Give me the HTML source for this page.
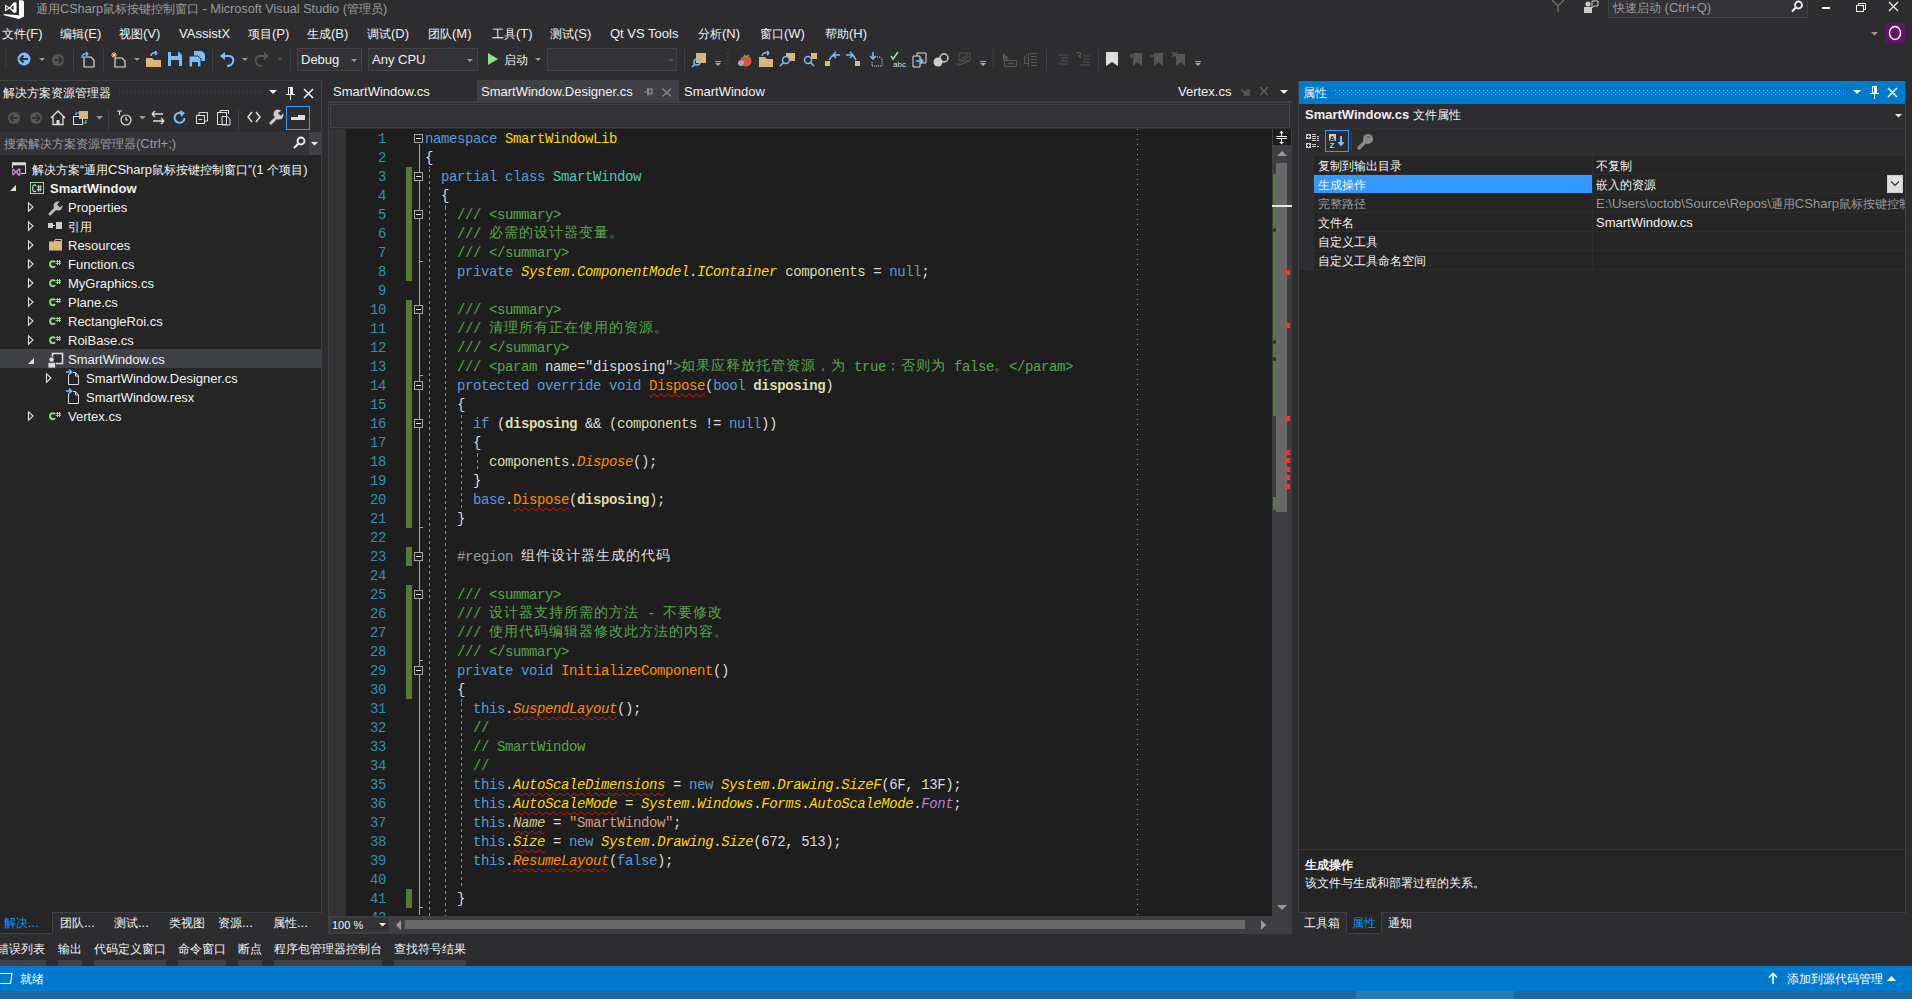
<!DOCTYPE html><html><head><meta charset="utf-8"><style>
*{box-sizing:border-box}
html,body{margin:0;padding:0}
body{width:1912px;height:999px;background:#2d2d30;position:relative;overflow:hidden;font-family:"Liberation Sans",sans-serif;font-size:12px;color:#f1f1f1}
.a{position:absolute;white-space:nowrap;line-height:16px;font-size:13px}
.z{font-size:0.923em}
svg.a{overflow:visible}
.code{font-family:"Liberation Mono",monospace;font-size:14px;letter-spacing:-0.4px;line-height:19px;color:#dcdcdc;left:425px;white-space:pre}
.k{color:#569cd6}.c{color:#57a64a}.t{color:#4ec9b0}.y{color:#ffd700}.yi{color:#ffd700;font-style:italic}
.o{color:#ff8c00}.oi{color:#ff8c00;font-style:italic}.p{color:#b180d7;font-style:italic}
.b{font-weight:bold;color:#dcdcaa}.w{color:#dcdcdc}.ni{color:#d2c98f;font-style:italic}.s{color:#d69d85}.f{color:#dcdcaa}.g{color:#9b9b9b}
.sq{text-decoration:underline wavy #e51400;text-decoration-thickness:1px;text-underline-offset:3px}
.cj{font-size:14px;letter-spacing:1px;position:relative;top:-1px}
.ln{font-family:"Liberation Mono",monospace;font-size:14px;letter-spacing:-0.4px;line-height:19px;color:#2b91af;text-align:right;width:40px;left:346px}
</style></head><body><svg class="a" style="left:0px;top:0px;" width="26" height="20" viewBox="0 0 26 20"><path d="M19 0.3 H22.5 L24 1.5 V16.5 L19 19 L3.7 15.2 V14 L19 15.2 Z" fill="#fff"/><path d="M5 4.5 L9.5 7.5 L14 2 L16.5 2.8 V12.2 L14 13 L9.5 8.5 L5 11.5 Z M6.2 6.6 V9.6 L8.3 8 Z M13.5 5 V10.6 L10.8 8 Z" fill="#fff" fill-rule="evenodd"/></svg><div class="a" style="left:36px;top:1px;color:#999;font-size:12.7px"><span class="z">通用</span>CSharp<span class="z">鼠标按键控制窗口</span> - Microsoft Visual Studio (<span class="z">管理员</span>)</div><svg class="a" style="left:1550px;top:0px;" width="16" height="14" viewBox="0 0 16 14"><path d="M2 0 L8 6 L14 0 M8 6 V12" stroke="#777" stroke-width="1.2" fill="none"/></svg><svg class="a" style="left:1583px;top:0px;" width="16" height="14" viewBox="0 0 16 14"><rect x="1" y="7" width="8" height="6" fill="#ccc"/><circle cx="5" cy="4" r="2.6" fill="#ccc"/><path d="M9 1 H15 V6 H11 L9 8 Z" stroke="#ccc" fill="none"/></svg><div class="a" style="left:1608px;top:0px;width:200px;height:18px;background:#333337;border:1px solid #434346;border-top:none"></div><div class="a" style="left:1613px;top:0px;color:#999"><span class="z">快速启动</span> (Ctrl+Q)</div><svg class="a" style="left:1790px;top:0px;" width="14" height="14" viewBox="0 0 14 14"><circle cx="8.5" cy="5" r="3.5" stroke="#eee" stroke-width="1.8" fill="none"/><path d="M6 7.5 L2 11.5" stroke="#eee" stroke-width="2.2"/></svg><div class="a" style="left:1822px;top:7px;width:8px;height:2px;background:#f1f1f1;"></div><svg class="a" style="left:1854px;top:1px;" width="14" height="12" viewBox="0 0 14 12"><rect x="2.5" y="4.5" width="7" height="6" stroke="#f1f1f1" fill="none"/><path d="M4.5 4.5 V2.5 H11.5 V8.5 H9.5" stroke="#f1f1f1" fill="none"/></svg><svg class="a" style="left:1888px;top:1px;" width="12" height="12" viewBox="0 0 12 12"><path d="M1 1 L10 10 M10 1 L1 10" stroke="#f1f1f1" stroke-width="1.3"/></svg><svg class="a" style="left:1871px;top:31px;" width="8" height="6" viewBox="0 0 8 6"><path d="M0 1 H7 L3.5 4.5Z" fill="#999"/></svg><div class="a" style="left:1885px;top:23px;width:20px;height:20px;background:#5e1566;"></div><svg class="a" style="left:1886px;top:24px;" width="18" height="18" viewBox="0 0 18 18"><ellipse cx="9" cy="9" rx="5.5" ry="6.5" stroke="#fff" stroke-width="1.4" fill="none"/></svg><div class="a" style="left:2px;top:26px;"><span class="z">文件</span>(F)</div><div class="a" style="left:60px;top:26px;"><span class="z">编辑</span>(E)</div><div class="a" style="left:119px;top:26px;"><span class="z">视图</span>(V)</div><div class="a" style="left:179px;top:26px;">VAssistX</div><div class="a" style="left:248px;top:26px;"><span class="z">项目</span>(P)</div><div class="a" style="left:307px;top:26px;"><span class="z">生成</span>(B)</div><div class="a" style="left:367px;top:26px;"><span class="z">调试</span>(D)</div><div class="a" style="left:428px;top:26px;"><span class="z">团队</span>(M)</div><div class="a" style="left:492px;top:26px;"><span class="z">工具</span>(T)</div><div class="a" style="left:550px;top:26px;"><span class="z">测试</span>(S)</div><div class="a" style="left:610px;top:26px;">Qt VS Tools</div><div class="a" style="left:698px;top:26px;"><span class="z">分析</span>(N)</div><div class="a" style="left:760px;top:26px;"><span class="z">窗口</span>(W)</div><div class="a" style="left:825px;top:26px;"><span class="z">帮助</span>(H)</div><svg class="a" style="left:5px;top:48px;" width="4" height="22" viewBox="0 0 4 22"><rect x="0" y="0" width="1" height="1" fill="#464646"/><rect x="1" y="2" width="1" height="1" fill="#464646"/><rect x="0" y="4" width="1" height="1" fill="#464646"/><rect x="1" y="6" width="1" height="1" fill="#464646"/><rect x="0" y="8" width="1" height="1" fill="#464646"/><rect x="1" y="10" width="1" height="1" fill="#464646"/><rect x="0" y="12" width="1" height="1" fill="#464646"/><rect x="1" y="14" width="1" height="1" fill="#464646"/><rect x="0" y="16" width="1" height="1" fill="#464646"/><rect x="1" y="18" width="1" height="1" fill="#464646"/><rect x="0" y="20" width="1" height="1" fill="#464646"/></svg><svg class="a" style="left:17px;top:52px;" width="14" height="14" viewBox="0 0 14 14"><circle cx="7" cy="7" r="6.5" fill="#75beff"/><path d="M3 7 H11 M3 7 L6.5 3.5 M3 7 L6.5 10.5" stroke="#2d2d30" stroke-width="1.8" fill="none"/></svg><svg class="a" style="left:39px;top:58px;" width="6" height="4" viewBox="0 0 6 4"><path d="M0 0 H6 L3 3Z" fill="#999"/></svg><svg class="a" style="left:51px;top:53px;" width="14" height="14" viewBox="0 0 14 14"><circle cx="7" cy="7" r="6" fill="#555"/><path d="M11 7 H3 M11 7 L7.5 3.5 M11 7 L7.5 10.5" stroke="#2d2d30" stroke-width="1.6" fill="none"/></svg><div class="a" style="left:73px;top:49px;width:1px;height:22px;background:#3f3f46;"></div><svg class="a" style="left:81px;top:52px;" width="15" height="16" viewBox="0 0 15 16"><path d="M3 5 H10 L13 8 V15 H3 Z" stroke="#ddd" fill="none" stroke-width="1.2"/><path d="M1 6 C1 2 4 1 7 2 L5 0 M7 2 L5 4" stroke="#75beff" stroke-width="1.4" fill="none"/></svg><div class="a" style="left:103px;top:49px;width:1px;height:22px;background:#3f3f46;"></div><svg class="a" style="left:111px;top:52px;" width="16" height="16" viewBox="0 0 16 16"><path d="M4 6 H11 L14 9 V15 H4 Z" stroke="#ddd" fill="none" stroke-width="1.2"/><path d="M3 0 V6 M0 3 H6 M1 1 L5 5 M5 1 L1 5" stroke="#ffc66d" stroke-width="1"/></svg><svg class="a" style="left:134px;top:58px;" width="6" height="4" viewBox="0 0 6 4"><path d="M0 0 H6 L3 3Z" fill="#999"/></svg><svg class="a" style="left:145px;top:52px;" width="17" height="16" viewBox="0 0 17 16"><path d="M1 6 H7 L9 8 H16 V15 H1 Z" fill="#dcb67a"/><path d="M6 4 C6 1 9 0 12 1 L10 -1 M12 1 L10 3" stroke="#75beff" stroke-width="1.4" fill="none"/></svg><svg class="a" style="left:168px;top:52px;" width="14" height="14" viewBox="0 0 14 14"><path d="M0 0 H11 L14 3 V14 H0 Z" fill="#75beff"/><rect x="3" y="0" width="7" height="4" fill="#2d2d30"/><rect x="3" y="8" width="8" height="6" fill="#2d2d30"/></svg><svg class="a" style="left:189px;top:51px;" width="17" height="16" viewBox="0 0 17 16"><path d="M5 0 H13 L16 3 V10 H5 Z" fill="#75beff"/><path d="M0 5 H9 L12 8 V16 H0 Z" fill="#75beff" stroke="#2d2d30"/><rect x="3" y="11" width="6" height="5" fill="#2d2d30"/></svg><div class="a" style="left:212px;top:49px;width:1px;height:22px;background:#3f3f46;"></div><svg class="a" style="left:219px;top:51px;" width="16" height="16" viewBox="0 0 16 16"><path d="M3 5 H10 C14 5 15 9 14 11 C13 14 10 15 8 15" stroke="#75beff" stroke-width="2" fill="none"/><path d="M1 5 L6 1 V9 Z" fill="#75beff"/></svg><svg class="a" style="left:242px;top:58px;" width="6" height="4" viewBox="0 0 6 4"><path d="M0 0 H6 L3 3Z" fill="#999"/></svg><svg class="a" style="left:254px;top:51px;" width="16" height="16" viewBox="0 0 16 16"><path d="M13 5 H6 C2 5 1 9 2 11 C3 14 6 15 8 15" stroke="#555" stroke-width="2" fill="none"/><path d="M15 5 L10 1 V9 Z" fill="#555"/></svg><svg class="a" style="left:277px;top:58px;" width="6" height="4" viewBox="0 0 6 4"><path d="M0 0 H6 L3 3Z" fill="#555"/></svg><div class="a" style="left:290px;top:49px;width:1px;height:22px;background:#3f3f46;"></div><div class="a" style="left:297px;top:48px;width:65px;height:23px;background:#333337;border:1px solid #434346"></div><div class="a" style="left:301px;top:52px;">Debug</div><svg class="a" style="left:351px;top:59px;" width="6" height="4" viewBox="0 0 6 4"><path d="M0 0 H6 L3 3Z" fill="#999"/></svg><div class="a" style="left:368px;top:48px;width:110px;height:23px;background:#333337;border:1px solid #434346"></div><div class="a" style="left:372px;top:52px;">Any CPU</div><svg class="a" style="left:467px;top:59px;" width="6" height="4" viewBox="0 0 6 4"><path d="M0 0 H6 L3 3Z" fill="#999"/></svg><svg class="a" style="left:487px;top:52px;" width="12" height="14" viewBox="0 0 12 14"><path d="M1 1 L11 7 L1 13 Z" fill="#8ae28a"/></svg><div class="a" style="left:504px;top:52px;"><span class="z">启动</span></div><svg class="a" style="left:535px;top:58px;" width="6" height="4" viewBox="0 0 6 4"><path d="M0 0 H6 L3 3Z" fill="#999"/></svg><div class="a" style="left:547px;top:48px;width:130px;height:23px;background:#333337;border:1px solid #434346"></div><svg class="a" style="left:668px;top:59px;" width="6" height="4" viewBox="0 0 6 4"><path d="M0 0 H6 L3 3Z" fill="#555"/></svg><div class="a" style="left:684px;top:49px;width:1px;height:22px;background:#3f3f46;"></div><svg class="a" style="left:692px;top:52px;" width="16" height="16" viewBox="0 0 16 16"><path d="M4 1 H14 V11 H4 Z" fill="#dcb67a"/><circle cx="5" cy="10" r="3" stroke="#75beff" stroke-width="1.5" fill="none"/><path d="M3 12 L0 15" stroke="#75beff" stroke-width="1.6"/></svg><svg class="a" style="left:737px;top:52px;" width="16" height="16" viewBox="0 0 16 16"><circle cx="9" cy="9" r="5.5" fill="#e05238"/><path d="M7 3 L9 5 L12 3" stroke="#4caf50" stroke-width="1.5" fill="none"/><circle cx="4" cy="11" r="3" fill="#aaa"/></svg><svg class="a" style="left:758px;top:52px;" width="16" height="16" viewBox="0 0 16 16"><path d="M1 5 H7 L9 7 H15 V15 H1 Z" fill="#dcb67a"/><path d="M4 4 C4 1 8 0 11 1 L9 -1 M11 1 L9 3" stroke="#75beff" stroke-width="1.4" fill="none"/></svg><svg class="a" style="left:780px;top:52px;" width="16" height="16" viewBox="0 0 16 16"><rect x="6" y="1" width="9" height="8" fill="#dcb67a"/><circle cx="6" cy="8" r="3.5" stroke="#75beff" stroke-width="1.5" fill="#2d2d30"/><path d="M3.5 10.5 L0 14" stroke="#75beff" stroke-width="1.6"/></svg><svg class="a" style="left:802px;top:52px;" width="16" height="16" viewBox="0 0 16 16"><rect x="9" y="1" width="6" height="6" fill="#dcb67a"/><circle cx="6" cy="8" r="3.5" stroke="#75beff" stroke-width="1.5" fill="none"/><path d="M8.5 10.5 L12 14" stroke="#75beff" stroke-width="1.6"/></svg><svg class="a" style="left:825px;top:52px;" width="16" height="16" viewBox="0 0 16 16"><rect x="0" y="9" width="5" height="5" fill="#dcb67a"/><path d="M15 3 H8 M8 3 L11 0 M8 3 L11 6 M8 3 L4 8" stroke="#75beff" stroke-width="1.5" fill="none"/></svg><svg class="a" style="left:846px;top:52px;" width="16" height="16" viewBox="0 0 16 16"><rect x="9" y="9" width="5" height="5" fill="#dcb67a"/><path d="M0 3 H7 M7 3 L4 0 M7 3 L4 6 M7 3 L10 8" stroke="#75beff" stroke-width="1.5" fill="none"/></svg><svg class="a" style="left:868px;top:52px;" width="16" height="16" viewBox="0 0 16 16"><path d="M5 0 V7 M2 4 L5 7 L8 4" stroke="#75beff" stroke-width="1.5" fill="none"/><path d="M9 5 H12 L14 7 V14 H4 V10" stroke="#ddd" stroke-dasharray="1 1" fill="none"/></svg><svg class="a" style="left:890px;top:52px;" width="16" height="16" viewBox="0 0 16 16"><path d="M1 4 L3 7 L8 0" stroke="#8ae28a" stroke-width="1.6" fill="none"/><text x="3" y="15" font-size="8" fill="#ddd" font-family="Liberation Sans">abc</text></svg><svg class="a" style="left:912px;top:52px;" width="16" height="16" viewBox="0 0 16 16"><path d="M1 4 H8 V15 H1 Z" stroke="#ddd" fill="none"/><path d="M5 4 V1 H14 V11 H8" stroke="#ddd" fill="none"/><path d="M4 9 H11 M8 6 L11 9 L8 12" stroke="#75beff" stroke-width="1.4" fill="none"/></svg><svg class="a" style="left:933px;top:52px;" width="16" height="16" viewBox="0 0 16 16"><circle cx="5" cy="10" r="4.5" fill="#ccc"/><circle cx="11" cy="6" r="4" stroke="#ccc" stroke-width="1.5" fill="none"/></svg><svg class="a" style="left:956px;top:52px;" width="16" height="16" viewBox="0 0 16 16"><path d="M3 1 H14 V9 H3 Z" stroke="#555" fill="none"/><path d="M4 8 L12 2 M6 9 L13 4 M0 12 H4 M1 14 L13 9" stroke="#555" fill="none"/></svg><svg class="a" style="left:1002px;top:52px;" width="16" height="16" viewBox="0 0 16 16"><path d="M1 1 V9 L3 7 L5 9 L6 8 L4 6 L7 6 Z" fill="#555"/><rect x="2.5" y="8.5" width="12" height="6" stroke="#555" fill="none"/><rect x="6" y="11" width="6" height="1.2" fill="#555"/></svg><svg class="a" style="left:1023px;top:52px;" width="16" height="16" viewBox="0 0 16 16"><path d="M1.5 4 V11.5 H5 M1.5 4 H4 M5.5 1 V15 M7 1.5 H14 M8 4.5 H14 M8 7.5 H14 M8 10.5 H14 M8 13.5 H14" stroke="#555" fill="none" stroke-width="1.1"/></svg><svg class="a" style="left:1055px;top:52px;" width="16" height="16" viewBox="0 0 16 16"><path d="M3 3 H13 M6 6 H13 M6 9 H13 M3 12 H13" stroke="#555" stroke-width="1.2"/></svg><svg class="a" style="left:1076px;top:52px;" width="16" height="16" viewBox="0 0 16 16"><path d="M7 4 H14 M7 7 H14 M7 10 H14 M4 13 H14 M1 2 C1 0 5 0 5 2 L3 4 L5 6" stroke="#555" stroke-width="1.2" fill="none"/></svg><svg class="a" style="left:715px;top:63px;" width="6" height="4" viewBox="0 0 6 4"><path d="M0 0 H6 L3 3Z" fill="#aaa"/></svg><div class="a" style="left:715px;top:61px;width:6px;height:1px;background:#aaa;"></div><svg class="a" style="left:727px;top:48px;" width="4" height="22" viewBox="0 0 4 22"><rect x="0" y="0" width="1" height="1" fill="#464646"/><rect x="1" y="2" width="1" height="1" fill="#464646"/><rect x="0" y="4" width="1" height="1" fill="#464646"/><rect x="1" y="6" width="1" height="1" fill="#464646"/><rect x="0" y="8" width="1" height="1" fill="#464646"/><rect x="1" y="10" width="1" height="1" fill="#464646"/><rect x="0" y="12" width="1" height="1" fill="#464646"/><rect x="1" y="14" width="1" height="1" fill="#464646"/><rect x="0" y="16" width="1" height="1" fill="#464646"/><rect x="1" y="18" width="1" height="1" fill="#464646"/><rect x="0" y="20" width="1" height="1" fill="#464646"/></svg><svg class="a" style="left:980px;top:63px;" width="6" height="4" viewBox="0 0 6 4"><path d="M0 0 H6 L3 3Z" fill="#aaa"/></svg><div class="a" style="left:980px;top:61px;width:6px;height:1px;background:#aaa;"></div><svg class="a" style="left:992px;top:48px;" width="4" height="22" viewBox="0 0 4 22"><rect x="0" y="0" width="1" height="1" fill="#464646"/><rect x="1" y="2" width="1" height="1" fill="#464646"/><rect x="0" y="4" width="1" height="1" fill="#464646"/><rect x="1" y="6" width="1" height="1" fill="#464646"/><rect x="0" y="8" width="1" height="1" fill="#464646"/><rect x="1" y="10" width="1" height="1" fill="#464646"/><rect x="0" y="12" width="1" height="1" fill="#464646"/><rect x="1" y="14" width="1" height="1" fill="#464646"/><rect x="0" y="16" width="1" height="1" fill="#464646"/><rect x="1" y="18" width="1" height="1" fill="#464646"/><rect x="0" y="20" width="1" height="1" fill="#464646"/></svg><div class="a" style="left:1046px;top:49px;width:1px;height:22px;background:#3f3f46;"></div><div class="a" style="left:1098px;top:49px;width:1px;height:22px;background:#3f3f46;"></div><svg class="a" style="left:1106px;top:52px;" width="12" height="15" viewBox="0 0 12 15"><path d="M0 0 H12 V14 L6 10 L0 14 Z" fill="#ddd"/></svg><svg class="a" style="left:1129px;top:52px;" width="14" height="15" viewBox="0 0 14 15"><path d="M4 1 H13 V14 L8.5 10 L4 14 Z" fill="#555"/><path d="M6 4 H1 M1 4 L3 2 M1 4 L3 6" stroke="#555" stroke-width="1.3" fill="none"/></svg><svg class="a" style="left:1150px;top:52px;" width="14" height="15" viewBox="0 0 14 15"><path d="M4 1 H13 V14 L8.5 10 L4 14 Z" fill="#555"/><path d="M0 4 H6 M6 4 L4 2 M6 4 L4 6" stroke="#555" stroke-width="1.3" fill="none"/></svg><svg class="a" style="left:1172px;top:52px;" width="14" height="15" viewBox="0 0 14 15"><path d="M4 2 H13 V14 L8.5 10 L4 14 Z" fill="#555"/><path d="M0 0 L5 5 M5 0 L0 5" stroke="#555" stroke-width="1.3"/></svg><svg class="a" style="left:1195px;top:63px;" width="6" height="4" viewBox="0 0 6 4"><path d="M0 0 H6 L3 3Z" fill="#aaa"/></svg><div class="a" style="left:1195px;top:61px;width:6px;height:1px;background:#aaa;"></div><div class="a" style="left:0px;top:80px;width:322px;height:1px;background:#3f3f46;"></div><div class="a" style="left:0px;top:81px;width:321px;height:832px;background:#252526;"></div><div class="a" style="left:321px;top:80px;width:1px;height:833px;background:#3f3f46;"></div><div class="a" style="left:0px;top:81px;width:321px;height:51px;background:#2d2d30;"></div><div class="a" style="left:3px;top:85px;"><span class="z">解决方案资源管理器</span></div><svg class="a" style="left:119px;top:90px;" width="144" height="6" viewBox="0 0 144 6"><rect x="0" y="0" width="1" height="1" fill="#46464c"/><rect x="2" y="2" width="1" height="1" fill="#46464c"/><rect x="0" y="4" width="1" height="1" fill="#46464c"/><rect x="4" y="0" width="1" height="1" fill="#46464c"/><rect x="6" y="2" width="1" height="1" fill="#46464c"/><rect x="4" y="4" width="1" height="1" fill="#46464c"/><rect x="8" y="0" width="1" height="1" fill="#46464c"/><rect x="10" y="2" width="1" height="1" fill="#46464c"/><rect x="8" y="4" width="1" height="1" fill="#46464c"/><rect x="12" y="0" width="1" height="1" fill="#46464c"/><rect x="14" y="2" width="1" height="1" fill="#46464c"/><rect x="12" y="4" width="1" height="1" fill="#46464c"/><rect x="16" y="0" width="1" height="1" fill="#46464c"/><rect x="18" y="2" width="1" height="1" fill="#46464c"/><rect x="16" y="4" width="1" height="1" fill="#46464c"/><rect x="20" y="0" width="1" height="1" fill="#46464c"/><rect x="22" y="2" width="1" height="1" fill="#46464c"/><rect x="20" y="4" width="1" height="1" fill="#46464c"/><rect x="24" y="0" width="1" height="1" fill="#46464c"/><rect x="26" y="2" width="1" height="1" fill="#46464c"/><rect x="24" y="4" width="1" height="1" fill="#46464c"/><rect x="28" y="0" width="1" height="1" fill="#46464c"/><rect x="30" y="2" width="1" height="1" fill="#46464c"/><rect x="28" y="4" width="1" height="1" fill="#46464c"/><rect x="32" y="0" width="1" height="1" fill="#46464c"/><rect x="34" y="2" width="1" height="1" fill="#46464c"/><rect x="32" y="4" width="1" height="1" fill="#46464c"/><rect x="36" y="0" width="1" height="1" fill="#46464c"/><rect x="38" y="2" width="1" height="1" fill="#46464c"/><rect x="36" y="4" width="1" height="1" fill="#46464c"/><rect x="40" y="0" width="1" height="1" fill="#46464c"/><rect x="42" y="2" width="1" height="1" fill="#46464c"/><rect x="40" y="4" width="1" height="1" fill="#46464c"/><rect x="44" y="0" width="1" height="1" fill="#46464c"/><rect x="46" y="2" width="1" height="1" fill="#46464c"/><rect x="44" y="4" width="1" height="1" fill="#46464c"/><rect x="48" y="0" width="1" height="1" fill="#46464c"/><rect x="50" y="2" width="1" height="1" fill="#46464c"/><rect x="48" y="4" width="1" height="1" fill="#46464c"/><rect x="52" y="0" width="1" height="1" fill="#46464c"/><rect x="54" y="2" width="1" height="1" fill="#46464c"/><rect x="52" y="4" width="1" height="1" fill="#46464c"/><rect x="56" y="0" width="1" height="1" fill="#46464c"/><rect x="58" y="2" width="1" height="1" fill="#46464c"/><rect x="56" y="4" width="1" height="1" fill="#46464c"/><rect x="60" y="0" width="1" height="1" fill="#46464c"/><rect x="62" y="2" width="1" height="1" fill="#46464c"/><rect x="60" y="4" width="1" height="1" fill="#46464c"/><rect x="64" y="0" width="1" height="1" fill="#46464c"/><rect x="66" y="2" width="1" height="1" fill="#46464c"/><rect x="64" y="4" width="1" height="1" fill="#46464c"/><rect x="68" y="0" width="1" height="1" fill="#46464c"/><rect x="70" y="2" width="1" height="1" fill="#46464c"/><rect x="68" y="4" width="1" height="1" fill="#46464c"/><rect x="72" y="0" width="1" height="1" fill="#46464c"/><rect x="74" y="2" width="1" height="1" fill="#46464c"/><rect x="72" y="4" width="1" height="1" fill="#46464c"/><rect x="76" y="0" width="1" height="1" fill="#46464c"/><rect x="78" y="2" width="1" height="1" fill="#46464c"/><rect x="76" y="4" width="1" height="1" fill="#46464c"/><rect x="80" y="0" width="1" height="1" fill="#46464c"/><rect x="82" y="2" width="1" height="1" fill="#46464c"/><rect x="80" y="4" width="1" height="1" fill="#46464c"/><rect x="84" y="0" width="1" height="1" fill="#46464c"/><rect x="86" y="2" width="1" height="1" fill="#46464c"/><rect x="84" y="4" width="1" height="1" fill="#46464c"/><rect x="88" y="0" width="1" height="1" fill="#46464c"/><rect x="90" y="2" width="1" height="1" fill="#46464c"/><rect x="88" y="4" width="1" height="1" fill="#46464c"/><rect x="92" y="0" width="1" height="1" fill="#46464c"/><rect x="94" y="2" width="1" height="1" fill="#46464c"/><rect x="92" y="4" width="1" height="1" fill="#46464c"/><rect x="96" y="0" width="1" height="1" fill="#46464c"/><rect x="98" y="2" width="1" height="1" fill="#46464c"/><rect x="96" y="4" width="1" height="1" fill="#46464c"/><rect x="100" y="0" width="1" height="1" fill="#46464c"/><rect x="102" y="2" width="1" height="1" fill="#46464c"/><rect x="100" y="4" width="1" height="1" fill="#46464c"/><rect x="104" y="0" width="1" height="1" fill="#46464c"/><rect x="106" y="2" width="1" height="1" fill="#46464c"/><rect x="104" y="4" width="1" height="1" fill="#46464c"/><rect x="108" y="0" width="1" height="1" fill="#46464c"/><rect x="110" y="2" width="1" height="1" fill="#46464c"/><rect x="108" y="4" width="1" height="1" fill="#46464c"/><rect x="112" y="0" width="1" height="1" fill="#46464c"/><rect x="114" y="2" width="1" height="1" fill="#46464c"/><rect x="112" y="4" width="1" height="1" fill="#46464c"/><rect x="116" y="0" width="1" height="1" fill="#46464c"/><rect x="118" y="2" width="1" height="1" fill="#46464c"/><rect x="116" y="4" width="1" height="1" fill="#46464c"/><rect x="120" y="0" width="1" height="1" fill="#46464c"/><rect x="122" y="2" width="1" height="1" fill="#46464c"/><rect x="120" y="4" width="1" height="1" fill="#46464c"/><rect x="124" y="0" width="1" height="1" fill="#46464c"/><rect x="126" y="2" width="1" height="1" fill="#46464c"/><rect x="124" y="4" width="1" height="1" fill="#46464c"/><rect x="128" y="0" width="1" height="1" fill="#46464c"/><rect x="130" y="2" width="1" height="1" fill="#46464c"/><rect x="128" y="4" width="1" height="1" fill="#46464c"/><rect x="132" y="0" width="1" height="1" fill="#46464c"/><rect x="134" y="2" width="1" height="1" fill="#46464c"/><rect x="132" y="4" width="1" height="1" fill="#46464c"/><rect x="136" y="0" width="1" height="1" fill="#46464c"/><rect x="138" y="2" width="1" height="1" fill="#46464c"/><rect x="136" y="4" width="1" height="1" fill="#46464c"/><rect x="140" y="0" width="1" height="1" fill="#46464c"/><rect x="142" y="2" width="1" height="1" fill="#46464c"/><rect x="140" y="4" width="1" height="1" fill="#46464c"/></svg><svg class="a" style="left:269px;top:90px;" width="8" height="5" viewBox="0 0 8 5"><path d="M0 0 H8 L4 4Z" fill="#f1f1f1"/></svg><svg class="a" style="left:286px;top:87px;" width="9" height="13" viewBox="0 0 9 13"><path d="M2 0 H7 V7 H9 V8 H0 V7 H2 Z M3 1 V7 H4 V1 Z M4.5 8 V13" stroke="none" fill="#f1f1f1"/><rect x="4" y="8" width="1" height="5" fill="#f1f1f1"/></svg><svg class="a" style="left:303px;top:88px;" width="11" height="11" viewBox="0 0 11 11"><path d="M1 1 L10 10 M10 1 L1 10" stroke="#f1f1f1" stroke-width="1.6"/></svg><svg class="a" style="left:7px;top:111px;" width="14" height="14" viewBox="0 0 14 14"><circle cx="7" cy="7" r="6" fill="#555"/><path d="M3 7 H11 M3 7 L6.5 3.5 M3 7 L6.5 10.5" stroke="#2d2d30" stroke-width="1.6" fill="none"/></svg><svg class="a" style="left:29px;top:111px;" width="14" height="14" viewBox="0 0 14 14"><circle cx="7" cy="7" r="6" fill="#555"/><path d="M11 7 H3 M11 7 L7.5 3.5 M11 7 L7.5 10.5" stroke="#2d2d30" stroke-width="1.6" fill="none"/></svg><svg class="a" style="left:50px;top:110px;" width="16" height="16" viewBox="0 0 16 16"><path d="M1 8 L8 1 L15 8 M3 6.5 V14.5 H13 V6.5" stroke="#ddd" stroke-width="1.3" fill="none"/><rect x="6.5" y="10" width="3" height="5" fill="#ddd"/></svg><svg class="a" style="left:73px;top:110px;" width="16" height="16" viewBox="0 0 16 16"><rect x="0.5" y="6.5" width="9" height="8" stroke="#ddd" fill="none"/><rect x="6" y="1" width="9" height="8" fill="#dcb67a"/><path d="M3 5 V3 H6" stroke="#75beff" stroke-width="1.2" fill="none"/><path d="M13 10 V13 H9" stroke="#75beff" stroke-width="1.2" fill="none"/></svg><svg class="a" style="left:96px;top:116px;" width="7" height="4" viewBox="0 0 7 4"><path d="M0 0 H7 L3.5 3.5Z" fill="#999"/></svg><div class="a" style="left:108px;top:109px;width:1px;height:21px;background:#3f3f46;"></div><svg class="a" style="left:117px;top:110px;" width="15" height="16" viewBox="0 0 15 16"><circle cx="9" cy="10" r="5" stroke="#ddd" stroke-width="1.2" fill="none"/><path d="M9 7 V10 H11 M0 1 H5 M2.5 1 V5" stroke="#ddd" stroke-width="1.2" fill="none"/></svg><svg class="a" style="left:139px;top:116px;" width="7" height="4" viewBox="0 0 7 4"><path d="M0 0 H7 L3.5 3.5Z" fill="#999"/></svg><svg class="a" style="left:151px;top:110px;" width="14" height="15" viewBox="0 0 14 15"><path d="M1 4 H12 M1 4 L4 1 M1 4 L4 7 M13 11 H2 M13 11 L10 8 M13 11 L10 14" stroke="#ddd" stroke-width="1.4" fill="none"/></svg><svg class="a" style="left:173px;top:110px;" width="14" height="15" viewBox="0 0 14 15"><path d="M11.5 8 A5 5 0 1 1 9 3.5" stroke="#75beff" stroke-width="2" fill="none"/><path d="M7 0 L12 3 L8 7 Z" fill="#75beff"/></svg><svg class="a" style="left:195px;top:110px;" width="15" height="15" viewBox="0 0 15 15"><rect x="1.5" y="5.5" width="8" height="8" stroke="#ddd" fill="none"/><path d="M4 5 V2.5 H12.5 V11 H10 M3.5 9.5 H7.5" stroke="#ddd" fill="none"/></svg><svg class="a" style="left:217px;top:110px;" width="15" height="16" viewBox="0 0 15 16"><rect x="0.5" y="2.5" width="9" height="12" stroke="#ddd" fill="none"/><path d="M3 2 V0.5 H11.5 V4 M5 6.5 H10 L13 9 V15 H5 Z" stroke="#ddd" fill="none"/></svg><div class="a" style="left:238px;top:109px;width:1px;height:21px;background:#3f3f46;"></div><svg class="a" style="left:247px;top:111px;" width="14" height="12" viewBox="0 0 14 12"><path d="M5 1 L1 6 L5 11 M9 1 L13 6 L9 11" stroke="#ddd" stroke-width="1.5" fill="none"/></svg><svg class="a" style="left:268px;top:110px;" width="16" height="16" viewBox="0 0 16 16"><path d="M2 14 L8 8" stroke="#ccc" stroke-width="3"/><path d="M8 8 A4.5 4.5 0 1 1 14.5 3.5 L11.5 4.5 L11 1.5 A4.5 4.5 0 0 0 8 8Z" fill="#ccc"/><circle cx="11" cy="5" r="4.5" fill="#ccc"/><path d="M10 3 L14 0 L16 2 L13 6Z" fill="#2d2d30"/></svg><div class="a" style="left:286px;top:106px;width:24px;height:24px;background:#2d2d30;border:1px solid #3399ff"></div><div class="a" style="left:291px;top:117px;width:14px;height:3px;background:#ddd;"></div><div class="a" style="left:298px;top:115px;width:7px;height:2px;background:#ddd;"></div><div class="a" style="left:0px;top:132px;width:321px;height:23px;background:#333337;"></div><div class="a" style="left:309px;top:132px;width:12px;height:23px;background:#3f3f46;"></div><div class="a" style="left:4px;top:136px;color:#999"><span class="z">搜索解决方案资源管理器</span>(Ctrl+;)</div><svg class="a" style="left:292px;top:136px;" width="14" height="14" viewBox="0 0 14 14"><circle cx="9" cy="5" r="3.5" stroke="#f1f1f1" stroke-width="1.8" fill="none"/><path d="M6.5 7.5 L2 12" stroke="#f1f1f1" stroke-width="2.2"/></svg><svg class="a" style="left:311px;top:142px;" width="7" height="4" viewBox="0 0 7 4"><path d="M0 0 H7 L3.5 3.5Z" fill="#f1f1f1"/></svg><div class="a" style="left:0px;top:349px;width:321px;height:19px;background:#3f3f46;"></div><svg class="a" style="left:12px;top:162px;" width="16" height="16" viewBox="0 0 16 16"><rect x="0" y="0.3" width="14" height="3" fill="#ddd"/><path d="M0.5 3 V6 M13.5 3 V11.5 H9" stroke="#ddd" fill="none"/><path d="M0 7.5 L1.5 6.5 L4 9 L7 6 L8.5 6.7 V13.3 L7 14 L4 11 L1.5 13.5 L0 12.5 Z M1.3 8.7 V11.5 L3 10 Z M7.2 8.2 V11.8 L5.4 10 Z" fill="#c27fd6" fill-rule="evenodd"/></svg><div class="a" style="left:32px;top:162px;"><span class="z">解决方案“通用</span>CSharp<span class="z">鼠标按键控制窗口”</span>(1 <span class="z">个项目</span>)</div><svg class="a" style="left:10px;top:185px;" width="7" height="7" viewBox="0 0 7 7"><path d="M6 0 V6 H0 Z" fill="#dcdcdc"/></svg><svg class="a" style="left:30px;top:182px;" width="15" height="13" viewBox="0 0 15 13"><rect x="0.5" y="0.5" width="13" height="11" stroke="#8cd98c" fill="none"/><path d="M6 3.6 C5.2 2.4 2.6 2.4 2.6 6.2 C2.6 10 5.2 10 6 8.8" stroke="#ccc" stroke-width="1.2" fill="none"/><path d="M6.8 5 H11.8 M6.8 7.5 H11.8 M8.5 3.2 V9.4 M10.3 3.2 V9.4" stroke="#ccc" stroke-width="1.1"/></svg><div class="a" style="left:50px;top:181px;font-weight:bold">SmartWindow</div><svg class="a" style="left:28px;top:202px;" width="7" height="11" viewBox="0 0 7 11"><path d="M0.5 0.8 L5 5 L0.5 9.2 Z" stroke="#e0e0e0" stroke-width="1.1" fill="none"/></svg><svg class="a" style="left:48px;top:201px;" width="15" height="15" viewBox="0 0 15 15"><path d="M2 13 L8 7" stroke="#bbb" stroke-width="3" stroke-linecap="round"/><circle cx="10" cy="5" r="4.5" fill="#bbb"/><path d="M9 3.5 L12.5 0 L15.5 3 L12 6.5 Z" fill="#252526"/></svg><div class="a" style="left:68px;top:200px;">Properties</div><svg class="a" style="left:28px;top:221px;" width="7" height="11" viewBox="0 0 7 11"><path d="M0.5 0.8 L5 5 L0.5 9.2 Z" stroke="#e0e0e0" stroke-width="1.1" fill="none"/></svg><svg class="a" style="left:48px;top:222px;" width="15" height="8" viewBox="0 0 15 8"><rect x="0" y="1" width="5" height="5" fill="#ccc"/><rect x="5" y="3" width="2" height="1" fill="#ccc"/><rect x="8" y="0" width="6" height="7" fill="#ccc"/></svg><div class="a" style="left:68px;top:219px;"><span class="z">引用</span></div><svg class="a" style="left:28px;top:240px;" width="7" height="11" viewBox="0 0 7 11"><path d="M0.5 0.8 L5 5 L0.5 9.2 Z" stroke="#e0e0e0" stroke-width="1.1" fill="none"/></svg><svg class="a" style="left:49px;top:239px;" width="14" height="12" viewBox="0 0 14 12"><path d="M0 2.5 H5 L6 0 H13 V11.5 H0 Z" fill="#dcb67a"/><rect x="6.5" y="1" width="5.5" height="1" fill="#252526"/></svg><div class="a" style="left:68px;top:238px;">Resources</div><svg class="a" style="left:28px;top:259px;" width="7" height="11" viewBox="0 0 7 11"><path d="M0.5 0.8 L5 5 L0.5 9.2 Z" stroke="#e0e0e0" stroke-width="1.1" fill="none"/></svg><svg class="a" style="left:49px;top:260px;" width="13" height="9" viewBox="0 0 13 9"><path d="M6 2.2 C5 0.8 1.1 0.6 1.1 4.2 C1.1 7.8 5 7.6 6 6.2" stroke="#8cd98c" stroke-width="2" fill="none"/><path d="M6.5 1.5 H12 M6.5 3.5 H12 M8.5 0 V5 M10.5 0 V5" stroke="#8cd98c" stroke-width="1"/></svg><div class="a" style="left:68px;top:257px;">Function.cs</div><svg class="a" style="left:28px;top:278px;" width="7" height="11" viewBox="0 0 7 11"><path d="M0.5 0.8 L5 5 L0.5 9.2 Z" stroke="#e0e0e0" stroke-width="1.1" fill="none"/></svg><svg class="a" style="left:49px;top:279px;" width="13" height="9" viewBox="0 0 13 9"><path d="M6 2.2 C5 0.8 1.1 0.6 1.1 4.2 C1.1 7.8 5 7.6 6 6.2" stroke="#8cd98c" stroke-width="2" fill="none"/><path d="M6.5 1.5 H12 M6.5 3.5 H12 M8.5 0 V5 M10.5 0 V5" stroke="#8cd98c" stroke-width="1"/></svg><div class="a" style="left:68px;top:276px;">MyGraphics.cs</div><svg class="a" style="left:28px;top:297px;" width="7" height="11" viewBox="0 0 7 11"><path d="M0.5 0.8 L5 5 L0.5 9.2 Z" stroke="#e0e0e0" stroke-width="1.1" fill="none"/></svg><svg class="a" style="left:49px;top:298px;" width="13" height="9" viewBox="0 0 13 9"><path d="M6 2.2 C5 0.8 1.1 0.6 1.1 4.2 C1.1 7.8 5 7.6 6 6.2" stroke="#8cd98c" stroke-width="2" fill="none"/><path d="M6.5 1.5 H12 M6.5 3.5 H12 M8.5 0 V5 M10.5 0 V5" stroke="#8cd98c" stroke-width="1"/></svg><div class="a" style="left:68px;top:295px;">Plane.cs</div><svg class="a" style="left:28px;top:316px;" width="7" height="11" viewBox="0 0 7 11"><path d="M0.5 0.8 L5 5 L0.5 9.2 Z" stroke="#e0e0e0" stroke-width="1.1" fill="none"/></svg><svg class="a" style="left:49px;top:317px;" width="13" height="9" viewBox="0 0 13 9"><path d="M6 2.2 C5 0.8 1.1 0.6 1.1 4.2 C1.1 7.8 5 7.6 6 6.2" stroke="#8cd98c" stroke-width="2" fill="none"/><path d="M6.5 1.5 H12 M6.5 3.5 H12 M8.5 0 V5 M10.5 0 V5" stroke="#8cd98c" stroke-width="1"/></svg><div class="a" style="left:68px;top:314px;">RectangleRoi.cs</div><svg class="a" style="left:28px;top:335px;" width="7" height="11" viewBox="0 0 7 11"><path d="M0.5 0.8 L5 5 L0.5 9.2 Z" stroke="#e0e0e0" stroke-width="1.1" fill="none"/></svg><svg class="a" style="left:49px;top:336px;" width="13" height="9" viewBox="0 0 13 9"><path d="M6 2.2 C5 0.8 1.1 0.6 1.1 4.2 C1.1 7.8 5 7.6 6 6.2" stroke="#8cd98c" stroke-width="2" fill="none"/><path d="M6.5 1.5 H12 M6.5 3.5 H12 M8.5 0 V5 M10.5 0 V5" stroke="#8cd98c" stroke-width="1"/></svg><div class="a" style="left:68px;top:333px;">RoiBase.cs</div><svg class="a" style="left:28px;top:358px;" width="7" height="7" viewBox="0 0 7 7"><path d="M6 0 V6 H0 Z" fill="#dcdcdc"/></svg><svg class="a" style="left:47px;top:352px;" width="16" height="17" viewBox="0 0 16 17"><rect x="5.5" y="1.5" width="10" height="10" stroke="#ddd" stroke-width="1.6" fill="#2b2b30"/><circle cx="4.5" cy="7.5" r="2.6" fill="#ddd" stroke="#3f3f46" stroke-width="0.8"/><rect x="1" y="10.5" width="7.5" height="5.5" fill="#ddd" stroke="#3f3f46" stroke-width="0.8"/></svg><div class="a" style="left:68px;top:352px;">SmartWindow.cs</div><svg class="a" style="left:46px;top:373px;" width="7" height="11" viewBox="0 0 7 11"><path d="M0.5 0.8 L5 5 L0.5 9.2 Z" stroke="#e0e0e0" stroke-width="1.1" fill="none"/></svg><svg class="a" style="left:66px;top:368px;" width="15" height="18" viewBox="0 0 15 18"><path d="M2.5 6.5 V16.5 H12.5 V8 L9.5 4.5 H7" stroke="#ddd" fill="none"/><path d="M9.5 4.5 V8 H12.5" stroke="#ddd" fill="none"/><path d="M0 4 H5.5 M3 1.5 L5.7 4 L3 6.5" stroke="#75beff" stroke-width="1.6" fill="none"/></svg><div class="a" style="left:86px;top:371px;">SmartWindow.Designer.cs</div><svg class="a" style="left:66px;top:387px;" width="15" height="18" viewBox="0 0 15 18"><path d="M2.5 6.5 V16.5 H12.5 V8 L9.5 4.5 H7" stroke="#ddd" fill="none"/><path d="M9.5 4.5 V8 H12.5" stroke="#ddd" fill="none"/><path d="M0 4 H5.5 M3 1.5 L5.7 4 L3 6.5" stroke="#75beff" stroke-width="1.6" fill="none"/></svg><div class="a" style="left:86px;top:390px;">SmartWindow.resx</div><svg class="a" style="left:28px;top:411px;" width="7" height="11" viewBox="0 0 7 11"><path d="M0.5 0.8 L5 5 L0.5 9.2 Z" stroke="#e0e0e0" stroke-width="1.1" fill="none"/></svg><svg class="a" style="left:49px;top:412px;" width="13" height="9" viewBox="0 0 13 9"><path d="M6 2.2 C5 0.8 1.1 0.6 1.1 4.2 C1.1 7.8 5 7.6 6 6.2" stroke="#8cd98c" stroke-width="2" fill="none"/><path d="M6.5 1.5 H12 M6.5 3.5 H12 M8.5 0 V5 M10.5 0 V5" stroke="#8cd98c" stroke-width="1"/></svg><div class="a" style="left:68px;top:409px;">Vertex.cs</div><div class="a" style="left:0px;top:912px;width:322px;height:24px;background:#2d2d30;"></div><div class="a" style="left:0px;top:912px;width:52px;height:21px;background:#252526;"></div><div class="a" style="left:52px;top:912px;width:270px;height:1px;background:#3f3f46;"></div><div class="a" style="left:52px;top:912px;width:1px;height:22px;background:#3f3f46;"></div><div class="a" style="left:0px;top:933px;width:53px;height:1px;background:#3f3f46;"></div><div class="a" style="left:4px;top:915px;color:#0097fb"><span class="z">解决</span>...</div><div class="a" style="left:60px;top:915px;"><span class="z">团队</span>...</div><div class="a" style="left:114px;top:915px;"><span class="z">测试</span>...</div><div class="a" style="left:169px;top:915px;"><span class="z">类视图</span></div><div class="a" style="left:218px;top:915px;"><span class="z">资源</span>...</div><div class="a" style="left:273px;top:915px;"><span class="z">属性</span>...</div><div class="a" style="left:477px;top:80px;width:202px;height:23px;background:#3f3f46;"></div><div class="a" style="left:333px;top:84px;">SmartWindow.cs</div><div class="a" style="left:481px;top:84px;">SmartWindow.Designer.cs</div><svg class="a" style="left:644px;top:88px;" width="10" height="9" viewBox="0 0 10 9"><path d="M0 4 H3" stroke="#888"/><rect x="3" y="0" width="1.5" height="7.5" fill="#888"/><rect x="4.5" y="1.2" width="3.5" height="4.5" stroke="#888" stroke-width="1.4" fill="none"/></svg><svg class="a" style="left:662px;top:88px;" width="10" height="9" viewBox="0 0 10 9"><path d="M0.5 0.5 L9 8.5 M9 0.5 L0.5 8.5" stroke="#888" stroke-width="1.3"/></svg><div class="a" style="left:684px;top:84px;">SmartWindow</div><div class="a" style="left:1178px;top:84px;">Vertex.cs</div><svg class="a" style="left:1240px;top:86px;" width="10" height="10" viewBox="0 0 10 10"><path d="M1 3 L5 7 M3 9 H9 V4 H6" stroke="#555" stroke-width="1.5" fill="none"/><rect x="4" y="5" width="5" height="4" fill="#555"/></svg><svg class="a" style="left:1259px;top:86px;" width="10" height="10" viewBox="0 0 10 10"><path d="M1 1 L9 9 M9 1 L1 9" stroke="#666" stroke-width="1.2"/></svg><svg class="a" style="left:1280px;top:90px;" width="8" height="5" viewBox="0 0 8 5"><path d="M0 0 H8 L4 4Z" fill="#f1f1f1"/></svg><div class="a" style="left:328px;top:101px;width:964px;height:833px;background:#3f3f46;"></div><div class="a" style="left:329px;top:103px;width:963px;height:831px;background:#2d2d30;"></div><div class="a" style="left:330px;top:104px;width:960px;height:24px;background:#333337;border:1px solid #434346"></div><div class="a" style="left:329px;top:129px;width:17px;height:787px;background:#333333;"></div><div class="a" style="left:346px;top:129px;width:926px;height:787px;background:#1e1e1e;"></div><div class="a" style="left:406px;top:167px;width:6px;height:114px;background:#577a32;"></div><div class="a" style="left:406px;top:300px;width:6px;height:228px;background:#577a32;"></div><div class="a" style="left:406px;top:547px;width:6px;height:19px;background:#577a32;"></div><div class="a" style="left:406px;top:585px;width:6px;height:114px;background:#577a32;"></div><div class="a" style="left:406px;top:889px;width:6px;height:19px;background:#577a32;"></div><div class="a ln" style="top:130px;height:786px;overflow:hidden;text-align:right">1<br>2<br>3<br>4<br>5<br>6<br>7<br>8<br>9<br>10<br>11<br>12<br>13<br>14<br>15<br>16<br>17<br>18<br>19<br>20<br>21<br>22<br>23<br>24<br>25<br>26<br>27<br>28<br>29<br>30<br>31<br>32<br>33<br>34<br>35<br>36<br>37<br>38<br>39<br>40<br>41<br>42<br></div><div class="a" style="left:419px;top:144px;width:1px;height:771px;background:#a5a5a5;"></div><div class="a" style="left:414px;top:134px;width:9px;height:9px;background:#1e1e1e;border:1px solid #a5a5a5"></div><div class="a" style="left:416px;top:138px;width:5px;height:1px;background:#e8e8e8;"></div><div class="a" style="left:414px;top:172px;width:9px;height:9px;background:#1e1e1e;border:1px solid #a5a5a5"></div><div class="a" style="left:416px;top:176px;width:5px;height:1px;background:#e8e8e8;"></div><div class="a" style="left:414px;top:210px;width:9px;height:9px;background:#1e1e1e;border:1px solid #a5a5a5"></div><div class="a" style="left:416px;top:214px;width:5px;height:1px;background:#e8e8e8;"></div><div class="a" style="left:414px;top:305px;width:9px;height:9px;background:#1e1e1e;border:1px solid #a5a5a5"></div><div class="a" style="left:416px;top:309px;width:5px;height:1px;background:#e8e8e8;"></div><div class="a" style="left:414px;top:381px;width:9px;height:9px;background:#1e1e1e;border:1px solid #a5a5a5"></div><div class="a" style="left:416px;top:385px;width:5px;height:1px;background:#e8e8e8;"></div><div class="a" style="left:414px;top:419px;width:9px;height:9px;background:#1e1e1e;border:1px solid #a5a5a5"></div><div class="a" style="left:416px;top:423px;width:5px;height:1px;background:#e8e8e8;"></div><div class="a" style="left:414px;top:552px;width:9px;height:9px;background:#1e1e1e;border:1px solid #a5a5a5"></div><div class="a" style="left:416px;top:556px;width:5px;height:1px;background:#e8e8e8;"></div><div class="a" style="left:414px;top:590px;width:9px;height:9px;background:#1e1e1e;border:1px solid #a5a5a5"></div><div class="a" style="left:416px;top:594px;width:5px;height:1px;background:#e8e8e8;"></div><div class="a" style="left:414px;top:666px;width:9px;height:9px;background:#1e1e1e;border:1px solid #a5a5a5"></div><div class="a" style="left:416px;top:670px;width:5px;height:1px;background:#e8e8e8;"></div><div class="a" style="left:419px;top:261px;width:4px;height:1px;background:#a5a5a5;"></div><div class="a" style="left:419px;top:375px;width:4px;height:1px;background:#a5a5a5;"></div><div class="a" style="left:419px;top:527px;width:4px;height:1px;background:#a5a5a5;"></div><div class="a" style="left:419px;top:660px;width:4px;height:1px;background:#a5a5a5;"></div><div class="a" style="left:419px;top:907px;width:4px;height:1px;background:#a5a5a5;"></div><div class="a" style="left:429px;top:167px;width:1px;height:760px;background:repeating-linear-gradient(#8a8a8a 0 3px,transparent 3px 6px) 0 2px;"></div><div class="a" style="left:445px;top:205px;width:1px;height:722px;background:repeating-linear-gradient(#8a8a8a 0 3px,transparent 3px 6px) 0 2px;"></div><div class="a" style="left:461px;top:414px;width:1px;height:95px;background:repeating-linear-gradient(#8a8a8a 0 3px,transparent 3px 6px) 0 1px;"></div><div class="a" style="left:477px;top:452px;width:1px;height:19px;background:repeating-linear-gradient(#8a8a8a 0 3px,transparent 3px 6px) 0 2px;"></div><div class="a" style="left:461px;top:699px;width:1px;height:190px;background:repeating-linear-gradient(#8a8a8a 0 3px,transparent 3px 6px) 0 4px;"></div><div class="a" style="left:1137px;top:129px;width:1px;height:787px;background:repeating-linear-gradient(#8a8a8a 0 1px,transparent 1px 5px);"></div><div class="a code" style="left:425px;top:130px"><span class="k">namespace</span> <span class="y">SmartWindowLib</span></div><div class="a code" style="left:425px;top:149px">{</div><div class="a code" style="left:441px;top:168px"><span class="k">partial</span> <span class="k">class</span> <span class="t">SmartWindow</span></div><div class="a code" style="left:441px;top:187px">{</div><div class="a code" style="left:457px;top:206px"><span class="c">/// &lt;summary&gt;</span></div><div class="a code" style="left:457px;top:225px"><span class="c">/// <span class="cj">必需的设计器变量。</span></span></div><div class="a code" style="left:457px;top:244px"><span class="c">/// &lt;/summary&gt;</span></div><div class="a code" style="left:457px;top:263px"><span class="k">private</span> <span class="yi">System</span>.<span class="yi">ComponentModel</span>.<span class="yi">IContainer</span> <span class="f">components</span> = <span class="k">null</span>;</div><div class="a code" style="left:457px;top:301px"><span class="c">/// &lt;summary&gt;</span></div><div class="a code" style="left:457px;top:320px"><span class="c">/// <span class="cj">清理所有正在使用的资源。</span></span></div><div class="a code" style="left:457px;top:339px"><span class="c">/// &lt;/summary&gt;</span></div><div class="a code" style="left:457px;top:358px"><span class="c">/// &lt;param </span><span class="w">name</span><span class="w">=</span><span class="w">"disposing"</span><span class="c">&gt;<span class="cj">如果应释放托管资源，为</span> true<span class="cj">；否则为</span> false<span class="cj">。</span>&lt;/param&gt;</span></div><div class="a code" style="left:457px;top:377px"><span class="k">protected</span> <span class="k">override</span> <span class="k">void</span> <span class="o sq">Dispose</span>(<span class="k">bool</span> <span class="b">disposing</span>)</div><div class="a code" style="left:457px;top:396px">{</div><div class="a code" style="left:473px;top:415px"><span class="k">if</span> (<span class="b">disposing</span> &amp;&amp; (<span class="f">components</span> != <span class="k">null</span>))</div><div class="a code" style="left:473px;top:434px">{</div><div class="a code" style="left:489px;top:453px"><span class="f">components</span>.<span class="oi">Dispose</span>();</div><div class="a code" style="left:473px;top:472px">}</div><div class="a code" style="left:473px;top:491px"><span class="k">base</span>.<span class="o sq">Dispose</span>(<span class="b">disposing</span>);</div><div class="a code" style="left:457px;top:510px">}</div><div class="a code" style="left:457px;top:548px"><span class="g">#region</span> <span class="w"><span class="cj">组件设计器生成的代码</span></span></div><div class="a code" style="left:457px;top:586px"><span class="c">/// &lt;summary&gt;</span></div><div class="a code" style="left:457px;top:605px"><span class="c">/// <span class="cj">设计器支持所需的方法</span> - <span class="cj">不要修改</span></span></div><div class="a code" style="left:457px;top:624px"><span class="c">/// <span class="cj">使用代码编辑器修改此方法的内容。</span></span></div><div class="a code" style="left:457px;top:643px"><span class="c">/// &lt;/summary&gt;</span></div><div class="a code" style="left:457px;top:662px"><span class="k">private</span> <span class="k">void</span> <span class="o">InitializeComponent</span>()</div><div class="a code" style="left:457px;top:681px">{</div><div class="a code" style="left:473px;top:700px"><span class="k">this</span>.<span class="oi sq">SuspendLayout</span>();</div><div class="a code" style="left:473px;top:719px"><span class="c">//</span></div><div class="a code" style="left:473px;top:738px"><span class="c">// SmartWindow</span></div><div class="a code" style="left:473px;top:757px"><span class="c">//</span></div><div class="a code" style="left:473px;top:776px"><span class="k">this</span>.<span class="yi sq">AutoScaleDimensions</span> = <span class="k">new</span> <span class="yi">System</span>.<span class="yi">Drawing</span>.<span class="yi">SizeF</span>(6F, 13F);</div><div class="a code" style="left:473px;top:795px"><span class="k">this</span>.<span class="yi sq">AutoScaleMode</span> = <span class="yi">System</span>.<span class="yi">Windows</span>.<span class="yi">Forms</span>.<span class="yi">AutoScaleMode</span>.<span class="p">Font</span>;</div><div class="a code" style="left:473px;top:814px"><span class="k">this</span>.<span class="ni sq">Name</span> = <span class="s">"SmartWindow"</span>;</div><div class="a code" style="left:473px;top:833px"><span class="k">this</span>.<span class="yi sq">Size</span> = <span class="k">new</span> <span class="yi">System</span>.<span class="yi">Drawing</span>.<span class="yi">Size</span>(672, 513);</div><div class="a code" style="left:473px;top:852px"><span class="k">this</span>.<span class="oi sq">ResumeLayout</span>(<span class="k">false</span>);</div><div class="a code" style="left:457px;top:890px">}</div><div class="a" style="left:1272px;top:129px;width:20px;height:805px;background:#3e3e42;"></div><div class="a" style="left:1273px;top:129px;width:18px;height:16px;background:#1e1e1e;"></div><svg class="a" style="left:1273px;top:129px;" width="18" height="16" viewBox="0 0 18 16"><path d="M3.5 7.5 H14 M3.5 9.5 H14 M8.5 2.5 V7 M8.5 10 V15" stroke="#f1f1f1" stroke-width="1" fill="none"/><path d="M6.3 4.2 L8.5 1.8 L10.7 4.2 Z M6.3 13 L8.5 15.4 L10.7 13 Z" fill="#f1f1f1"/></svg><svg class="a" style="left:1277px;top:151px;" width="10" height="6" viewBox="0 0 10 6"><path d="M0 5 L5 0 L10 5Z" fill="#999"/></svg><div class="a" style="left:1276px;top:163px;width:11px;height:349px;background:#686868;"></div><div class="a" style="left:1273px;top:174px;width:3px;height:54px;background:#577a32;"></div><div class="a" style="left:1273px;top:232px;width:3px;height:108px;background:#577a32;"></div><div class="a" style="left:1273px;top:344px;width:3px;height:13px;background:#577a32;"></div><div class="a" style="left:1273px;top:361px;width:3px;height:55px;background:#577a32;"></div><div class="a" style="left:1273px;top:497px;width:3px;height:13px;background:#577a32;"></div><div class="a" style="left:1273px;top:229px;width:3px;height:2px;background:#2a2a2c;"></div><div class="a" style="left:1273px;top:341px;width:3px;height:2px;background:#2a2a2c;"></div><div class="a" style="left:1273px;top:358px;width:3px;height:2px;background:#2a2a2c;"></div><div class="a" style="left:1285px;top:270px;width:5px;height:5px;background:#ff3030;"></div><div class="a" style="left:1285px;top:323px;width:5px;height:5px;background:#ff3030;"></div><div class="a" style="left:1285px;top:416px;width:5px;height:5px;background:#ff3030;"></div><div class="a" style="left:1285px;top:450px;width:5px;height:5px;background:#ff3030;"></div><div class="a" style="left:1285px;top:458px;width:5px;height:5px;background:#ff3030;"></div><div class="a" style="left:1285px;top:467px;width:5px;height:5px;background:#ff3030;"></div><div class="a" style="left:1285px;top:475px;width:5px;height:5px;background:#ff3030;"></div><div class="a" style="left:1285px;top:484px;width:5px;height:5px;background:#ff3030;"></div><div class="a" style="left:1272px;top:205px;width:20px;height:2px;background:#e8e8e8;"></div><svg class="a" style="left:1277px;top:905px;" width="10" height="6" viewBox="0 0 10 6"><path d="M0 0 L10 0 L5 5Z" fill="#999"/></svg><div class="a" style="left:329px;top:916px;width:943px;height:18px;background:#3e3e42;"></div><div class="a" style="left:330px;top:917px;width:60px;height:16px;background:#333337;border:1px solid #3f3f46"></div><div class="a" style="left:332px;top:917px;font-size:11px">100 %</div><svg class="a" style="left:379px;top:923px;" width="7" height="4" viewBox="0 0 7 4"><path d="M0 0 H7 L3.5 3.5Z" fill="#f1f1f1"/></svg><svg class="a" style="left:396px;top:920px;" width="6" height="10" viewBox="0 0 6 10"><path d="M5 0 V10 L0 5Z" fill="#999"/></svg><div class="a" style="left:405px;top:920px;width:840px;height:9px;background:#686868;"></div><svg class="a" style="left:1261px;top:920px;" width="6" height="10" viewBox="0 0 6 10"><path d="M0 0 V10 L5 5Z" fill="#999"/></svg><div class="a" style="left:1298px;top:81px;width:1px;height:832px;background:#3f3f46;"></div><div class="a" style="left:1905px;top:81px;width:1px;height:832px;background:#3f3f46;"></div><div class="a" style="left:1299px;top:81px;width:606px;height:23px;background:#007acc;"></div><div class="a" style="left:1303px;top:85px;"><span class="z">属性</span></div><svg class="a" style="left:1335px;top:90px;" width="512" height="6" viewBox="0 0 512 6"><rect x="0" y="0" width="1" height="1" fill="#59a9e5"/><rect x="2" y="2" width="1" height="1" fill="#59a9e5"/><rect x="0" y="4" width="1" height="1" fill="#59a9e5"/><rect x="4" y="0" width="1" height="1" fill="#59a9e5"/><rect x="6" y="2" width="1" height="1" fill="#59a9e5"/><rect x="4" y="4" width="1" height="1" fill="#59a9e5"/><rect x="8" y="0" width="1" height="1" fill="#59a9e5"/><rect x="10" y="2" width="1" height="1" fill="#59a9e5"/><rect x="8" y="4" width="1" height="1" fill="#59a9e5"/><rect x="12" y="0" width="1" height="1" fill="#59a9e5"/><rect x="14" y="2" width="1" height="1" fill="#59a9e5"/><rect x="12" y="4" width="1" height="1" fill="#59a9e5"/><rect x="16" y="0" width="1" height="1" fill="#59a9e5"/><rect x="18" y="2" width="1" height="1" fill="#59a9e5"/><rect x="16" y="4" width="1" height="1" fill="#59a9e5"/><rect x="20" y="0" width="1" height="1" fill="#59a9e5"/><rect x="22" y="2" width="1" height="1" fill="#59a9e5"/><rect x="20" y="4" width="1" height="1" fill="#59a9e5"/><rect x="24" y="0" width="1" height="1" fill="#59a9e5"/><rect x="26" y="2" width="1" height="1" fill="#59a9e5"/><rect x="24" y="4" width="1" height="1" fill="#59a9e5"/><rect x="28" y="0" width="1" height="1" fill="#59a9e5"/><rect x="30" y="2" width="1" height="1" fill="#59a9e5"/><rect x="28" y="4" width="1" height="1" fill="#59a9e5"/><rect x="32" y="0" width="1" height="1" fill="#59a9e5"/><rect x="34" y="2" width="1" height="1" fill="#59a9e5"/><rect x="32" y="4" width="1" height="1" fill="#59a9e5"/><rect x="36" y="0" width="1" height="1" fill="#59a9e5"/><rect x="38" y="2" width="1" height="1" fill="#59a9e5"/><rect x="36" y="4" width="1" height="1" fill="#59a9e5"/><rect x="40" y="0" width="1" height="1" fill="#59a9e5"/><rect x="42" y="2" width="1" height="1" fill="#59a9e5"/><rect x="40" y="4" width="1" height="1" fill="#59a9e5"/><rect x="44" y="0" width="1" height="1" fill="#59a9e5"/><rect x="46" y="2" width="1" height="1" fill="#59a9e5"/><rect x="44" y="4" width="1" height="1" fill="#59a9e5"/><rect x="48" y="0" width="1" height="1" fill="#59a9e5"/><rect x="50" y="2" width="1" height="1" fill="#59a9e5"/><rect x="48" y="4" width="1" height="1" fill="#59a9e5"/><rect x="52" y="0" width="1" height="1" fill="#59a9e5"/><rect x="54" y="2" width="1" height="1" fill="#59a9e5"/><rect x="52" y="4" width="1" height="1" fill="#59a9e5"/><rect x="56" y="0" width="1" height="1" fill="#59a9e5"/><rect x="58" y="2" width="1" height="1" fill="#59a9e5"/><rect x="56" y="4" width="1" height="1" fill="#59a9e5"/><rect x="60" y="0" width="1" height="1" fill="#59a9e5"/><rect x="62" y="2" width="1" height="1" fill="#59a9e5"/><rect x="60" y="4" width="1" height="1" fill="#59a9e5"/><rect x="64" y="0" width="1" height="1" fill="#59a9e5"/><rect x="66" y="2" width="1" height="1" fill="#59a9e5"/><rect x="64" y="4" width="1" height="1" fill="#59a9e5"/><rect x="68" y="0" width="1" height="1" fill="#59a9e5"/><rect x="70" y="2" width="1" height="1" fill="#59a9e5"/><rect x="68" y="4" width="1" height="1" fill="#59a9e5"/><rect x="72" y="0" width="1" height="1" fill="#59a9e5"/><rect x="74" y="2" width="1" height="1" fill="#59a9e5"/><rect x="72" y="4" width="1" height="1" fill="#59a9e5"/><rect x="76" y="0" width="1" height="1" fill="#59a9e5"/><rect x="78" y="2" width="1" height="1" fill="#59a9e5"/><rect x="76" y="4" width="1" height="1" fill="#59a9e5"/><rect x="80" y="0" width="1" height="1" fill="#59a9e5"/><rect x="82" y="2" width="1" height="1" fill="#59a9e5"/><rect x="80" y="4" width="1" height="1" fill="#59a9e5"/><rect x="84" y="0" width="1" height="1" fill="#59a9e5"/><rect x="86" y="2" width="1" height="1" fill="#59a9e5"/><rect x="84" y="4" width="1" height="1" fill="#59a9e5"/><rect x="88" y="0" width="1" height="1" fill="#59a9e5"/><rect x="90" y="2" width="1" height="1" fill="#59a9e5"/><rect x="88" y="4" width="1" height="1" fill="#59a9e5"/><rect x="92" y="0" width="1" height="1" fill="#59a9e5"/><rect x="94" y="2" width="1" height="1" fill="#59a9e5"/><rect x="92" y="4" width="1" height="1" fill="#59a9e5"/><rect x="96" y="0" width="1" height="1" fill="#59a9e5"/><rect x="98" y="2" width="1" height="1" fill="#59a9e5"/><rect x="96" y="4" width="1" height="1" fill="#59a9e5"/><rect x="100" y="0" width="1" height="1" fill="#59a9e5"/><rect x="102" y="2" width="1" height="1" fill="#59a9e5"/><rect x="100" y="4" width="1" height="1" fill="#59a9e5"/><rect x="104" y="0" width="1" height="1" fill="#59a9e5"/><rect x="106" y="2" width="1" height="1" fill="#59a9e5"/><rect x="104" y="4" width="1" height="1" fill="#59a9e5"/><rect x="108" y="0" width="1" height="1" fill="#59a9e5"/><rect x="110" y="2" width="1" height="1" fill="#59a9e5"/><rect x="108" y="4" width="1" height="1" fill="#59a9e5"/><rect x="112" y="0" width="1" height="1" fill="#59a9e5"/><rect x="114" y="2" width="1" height="1" fill="#59a9e5"/><rect x="112" y="4" width="1" height="1" fill="#59a9e5"/><rect x="116" y="0" width="1" height="1" fill="#59a9e5"/><rect x="118" y="2" width="1" height="1" fill="#59a9e5"/><rect x="116" y="4" width="1" height="1" fill="#59a9e5"/><rect x="120" y="0" width="1" height="1" fill="#59a9e5"/><rect x="122" y="2" width="1" height="1" fill="#59a9e5"/><rect x="120" y="4" width="1" height="1" fill="#59a9e5"/><rect x="124" y="0" width="1" height="1" fill="#59a9e5"/><rect x="126" y="2" width="1" height="1" fill="#59a9e5"/><rect x="124" y="4" width="1" height="1" fill="#59a9e5"/><rect x="128" y="0" width="1" height="1" fill="#59a9e5"/><rect x="130" y="2" width="1" height="1" fill="#59a9e5"/><rect x="128" y="4" width="1" height="1" fill="#59a9e5"/><rect x="132" y="0" width="1" height="1" fill="#59a9e5"/><rect x="134" y="2" width="1" height="1" fill="#59a9e5"/><rect x="132" y="4" width="1" height="1" fill="#59a9e5"/><rect x="136" y="0" width="1" height="1" fill="#59a9e5"/><rect x="138" y="2" width="1" height="1" fill="#59a9e5"/><rect x="136" y="4" width="1" height="1" fill="#59a9e5"/><rect x="140" y="0" width="1" height="1" fill="#59a9e5"/><rect x="142" y="2" width="1" height="1" fill="#59a9e5"/><rect x="140" y="4" width="1" height="1" fill="#59a9e5"/><rect x="144" y="0" width="1" height="1" fill="#59a9e5"/><rect x="146" y="2" width="1" height="1" fill="#59a9e5"/><rect x="144" y="4" width="1" height="1" fill="#59a9e5"/><rect x="148" y="0" width="1" height="1" fill="#59a9e5"/><rect x="150" y="2" width="1" height="1" fill="#59a9e5"/><rect x="148" y="4" width="1" height="1" fill="#59a9e5"/><rect x="152" y="0" width="1" height="1" fill="#59a9e5"/><rect x="154" y="2" width="1" height="1" fill="#59a9e5"/><rect x="152" y="4" width="1" height="1" fill="#59a9e5"/><rect x="156" y="0" width="1" height="1" fill="#59a9e5"/><rect x="158" y="2" width="1" height="1" fill="#59a9e5"/><rect x="156" y="4" width="1" height="1" fill="#59a9e5"/><rect x="160" y="0" width="1" height="1" fill="#59a9e5"/><rect x="162" y="2" width="1" height="1" fill="#59a9e5"/><rect x="160" y="4" width="1" height="1" fill="#59a9e5"/><rect x="164" y="0" width="1" height="1" fill="#59a9e5"/><rect x="166" y="2" width="1" height="1" fill="#59a9e5"/><rect x="164" y="4" width="1" height="1" fill="#59a9e5"/><rect x="168" y="0" width="1" height="1" fill="#59a9e5"/><rect x="170" y="2" width="1" height="1" fill="#59a9e5"/><rect x="168" y="4" width="1" height="1" fill="#59a9e5"/><rect x="172" y="0" width="1" height="1" fill="#59a9e5"/><rect x="174" y="2" width="1" height="1" fill="#59a9e5"/><rect x="172" y="4" width="1" height="1" fill="#59a9e5"/><rect x="176" y="0" width="1" height="1" fill="#59a9e5"/><rect x="178" y="2" width="1" height="1" fill="#59a9e5"/><rect x="176" y="4" width="1" height="1" fill="#59a9e5"/><rect x="180" y="0" width="1" height="1" fill="#59a9e5"/><rect x="182" y="2" width="1" height="1" fill="#59a9e5"/><rect x="180" y="4" width="1" height="1" fill="#59a9e5"/><rect x="184" y="0" width="1" height="1" fill="#59a9e5"/><rect x="186" y="2" width="1" height="1" fill="#59a9e5"/><rect x="184" y="4" width="1" height="1" fill="#59a9e5"/><rect x="188" y="0" width="1" height="1" fill="#59a9e5"/><rect x="190" y="2" width="1" height="1" fill="#59a9e5"/><rect x="188" y="4" width="1" height="1" fill="#59a9e5"/><rect x="192" y="0" width="1" height="1" fill="#59a9e5"/><rect x="194" y="2" width="1" height="1" fill="#59a9e5"/><rect x="192" y="4" width="1" height="1" fill="#59a9e5"/><rect x="196" y="0" width="1" height="1" fill="#59a9e5"/><rect x="198" y="2" width="1" height="1" fill="#59a9e5"/><rect x="196" y="4" width="1" height="1" fill="#59a9e5"/><rect x="200" y="0" width="1" height="1" fill="#59a9e5"/><rect x="202" y="2" width="1" height="1" fill="#59a9e5"/><rect x="200" y="4" width="1" height="1" fill="#59a9e5"/><rect x="204" y="0" width="1" height="1" fill="#59a9e5"/><rect x="206" y="2" width="1" height="1" fill="#59a9e5"/><rect x="204" y="4" width="1" height="1" fill="#59a9e5"/><rect x="208" y="0" width="1" height="1" fill="#59a9e5"/><rect x="210" y="2" width="1" height="1" fill="#59a9e5"/><rect x="208" y="4" width="1" height="1" fill="#59a9e5"/><rect x="212" y="0" width="1" height="1" fill="#59a9e5"/><rect x="214" y="2" width="1" height="1" fill="#59a9e5"/><rect x="212" y="4" width="1" height="1" fill="#59a9e5"/><rect x="216" y="0" width="1" height="1" fill="#59a9e5"/><rect x="218" y="2" width="1" height="1" fill="#59a9e5"/><rect x="216" y="4" width="1" height="1" fill="#59a9e5"/><rect x="220" y="0" width="1" height="1" fill="#59a9e5"/><rect x="222" y="2" width="1" height="1" fill="#59a9e5"/><rect x="220" y="4" width="1" height="1" fill="#59a9e5"/><rect x="224" y="0" width="1" height="1" fill="#59a9e5"/><rect x="226" y="2" width="1" height="1" fill="#59a9e5"/><rect x="224" y="4" width="1" height="1" fill="#59a9e5"/><rect x="228" y="0" width="1" height="1" fill="#59a9e5"/><rect x="230" y="2" width="1" height="1" fill="#59a9e5"/><rect x="228" y="4" width="1" height="1" fill="#59a9e5"/><rect x="232" y="0" width="1" height="1" fill="#59a9e5"/><rect x="234" y="2" width="1" height="1" fill="#59a9e5"/><rect x="232" y="4" width="1" height="1" fill="#59a9e5"/><rect x="236" y="0" width="1" height="1" fill="#59a9e5"/><rect x="238" y="2" width="1" height="1" fill="#59a9e5"/><rect x="236" y="4" width="1" height="1" fill="#59a9e5"/><rect x="240" y="0" width="1" height="1" fill="#59a9e5"/><rect x="242" y="2" width="1" height="1" fill="#59a9e5"/><rect x="240" y="4" width="1" height="1" fill="#59a9e5"/><rect x="244" y="0" width="1" height="1" fill="#59a9e5"/><rect x="246" y="2" width="1" height="1" fill="#59a9e5"/><rect x="244" y="4" width="1" height="1" fill="#59a9e5"/><rect x="248" y="0" width="1" height="1" fill="#59a9e5"/><rect x="250" y="2" width="1" height="1" fill="#59a9e5"/><rect x="248" y="4" width="1" height="1" fill="#59a9e5"/><rect x="252" y="0" width="1" height="1" fill="#59a9e5"/><rect x="254" y="2" width="1" height="1" fill="#59a9e5"/><rect x="252" y="4" width="1" height="1" fill="#59a9e5"/><rect x="256" y="0" width="1" height="1" fill="#59a9e5"/><rect x="258" y="2" width="1" height="1" fill="#59a9e5"/><rect x="256" y="4" width="1" height="1" fill="#59a9e5"/><rect x="260" y="0" width="1" height="1" fill="#59a9e5"/><rect x="262" y="2" width="1" height="1" fill="#59a9e5"/><rect x="260" y="4" width="1" height="1" fill="#59a9e5"/><rect x="264" y="0" width="1" height="1" fill="#59a9e5"/><rect x="266" y="2" width="1" height="1" fill="#59a9e5"/><rect x="264" y="4" width="1" height="1" fill="#59a9e5"/><rect x="268" y="0" width="1" height="1" fill="#59a9e5"/><rect x="270" y="2" width="1" height="1" fill="#59a9e5"/><rect x="268" y="4" width="1" height="1" fill="#59a9e5"/><rect x="272" y="0" width="1" height="1" fill="#59a9e5"/><rect x="274" y="2" width="1" height="1" fill="#59a9e5"/><rect x="272" y="4" width="1" height="1" fill="#59a9e5"/><rect x="276" y="0" width="1" height="1" fill="#59a9e5"/><rect x="278" y="2" width="1" height="1" fill="#59a9e5"/><rect x="276" y="4" width="1" height="1" fill="#59a9e5"/><rect x="280" y="0" width="1" height="1" fill="#59a9e5"/><rect x="282" y="2" width="1" height="1" fill="#59a9e5"/><rect x="280" y="4" width="1" height="1" fill="#59a9e5"/><rect x="284" y="0" width="1" height="1" fill="#59a9e5"/><rect x="286" y="2" width="1" height="1" fill="#59a9e5"/><rect x="284" y="4" width="1" height="1" fill="#59a9e5"/><rect x="288" y="0" width="1" height="1" fill="#59a9e5"/><rect x="290" y="2" width="1" height="1" fill="#59a9e5"/><rect x="288" y="4" width="1" height="1" fill="#59a9e5"/><rect x="292" y="0" width="1" height="1" fill="#59a9e5"/><rect x="294" y="2" width="1" height="1" fill="#59a9e5"/><rect x="292" y="4" width="1" height="1" fill="#59a9e5"/><rect x="296" y="0" width="1" height="1" fill="#59a9e5"/><rect x="298" y="2" width="1" height="1" fill="#59a9e5"/><rect x="296" y="4" width="1" height="1" fill="#59a9e5"/><rect x="300" y="0" width="1" height="1" fill="#59a9e5"/><rect x="302" y="2" width="1" height="1" fill="#59a9e5"/><rect x="300" y="4" width="1" height="1" fill="#59a9e5"/><rect x="304" y="0" width="1" height="1" fill="#59a9e5"/><rect x="306" y="2" width="1" height="1" fill="#59a9e5"/><rect x="304" y="4" width="1" height="1" fill="#59a9e5"/><rect x="308" y="0" width="1" height="1" fill="#59a9e5"/><rect x="310" y="2" width="1" height="1" fill="#59a9e5"/><rect x="308" y="4" width="1" height="1" fill="#59a9e5"/><rect x="312" y="0" width="1" height="1" fill="#59a9e5"/><rect x="314" y="2" width="1" height="1" fill="#59a9e5"/><rect x="312" y="4" width="1" height="1" fill="#59a9e5"/><rect x="316" y="0" width="1" height="1" fill="#59a9e5"/><rect x="318" y="2" width="1" height="1" fill="#59a9e5"/><rect x="316" y="4" width="1" height="1" fill="#59a9e5"/><rect x="320" y="0" width="1" height="1" fill="#59a9e5"/><rect x="322" y="2" width="1" height="1" fill="#59a9e5"/><rect x="320" y="4" width="1" height="1" fill="#59a9e5"/><rect x="324" y="0" width="1" height="1" fill="#59a9e5"/><rect x="326" y="2" width="1" height="1" fill="#59a9e5"/><rect x="324" y="4" width="1" height="1" fill="#59a9e5"/><rect x="328" y="0" width="1" height="1" fill="#59a9e5"/><rect x="330" y="2" width="1" height="1" fill="#59a9e5"/><rect x="328" y="4" width="1" height="1" fill="#59a9e5"/><rect x="332" y="0" width="1" height="1" fill="#59a9e5"/><rect x="334" y="2" width="1" height="1" fill="#59a9e5"/><rect x="332" y="4" width="1" height="1" fill="#59a9e5"/><rect x="336" y="0" width="1" height="1" fill="#59a9e5"/><rect x="338" y="2" width="1" height="1" fill="#59a9e5"/><rect x="336" y="4" width="1" height="1" fill="#59a9e5"/><rect x="340" y="0" width="1" height="1" fill="#59a9e5"/><rect x="342" y="2" width="1" height="1" fill="#59a9e5"/><rect x="340" y="4" width="1" height="1" fill="#59a9e5"/><rect x="344" y="0" width="1" height="1" fill="#59a9e5"/><rect x="346" y="2" width="1" height="1" fill="#59a9e5"/><rect x="344" y="4" width="1" height="1" fill="#59a9e5"/><rect x="348" y="0" width="1" height="1" fill="#59a9e5"/><rect x="350" y="2" width="1" height="1" fill="#59a9e5"/><rect x="348" y="4" width="1" height="1" fill="#59a9e5"/><rect x="352" y="0" width="1" height="1" fill="#59a9e5"/><rect x="354" y="2" width="1" height="1" fill="#59a9e5"/><rect x="352" y="4" width="1" height="1" fill="#59a9e5"/><rect x="356" y="0" width="1" height="1" fill="#59a9e5"/><rect x="358" y="2" width="1" height="1" fill="#59a9e5"/><rect x="356" y="4" width="1" height="1" fill="#59a9e5"/><rect x="360" y="0" width="1" height="1" fill="#59a9e5"/><rect x="362" y="2" width="1" height="1" fill="#59a9e5"/><rect x="360" y="4" width="1" height="1" fill="#59a9e5"/><rect x="364" y="0" width="1" height="1" fill="#59a9e5"/><rect x="366" y="2" width="1" height="1" fill="#59a9e5"/><rect x="364" y="4" width="1" height="1" fill="#59a9e5"/><rect x="368" y="0" width="1" height="1" fill="#59a9e5"/><rect x="370" y="2" width="1" height="1" fill="#59a9e5"/><rect x="368" y="4" width="1" height="1" fill="#59a9e5"/><rect x="372" y="0" width="1" height="1" fill="#59a9e5"/><rect x="374" y="2" width="1" height="1" fill="#59a9e5"/><rect x="372" y="4" width="1" height="1" fill="#59a9e5"/><rect x="376" y="0" width="1" height="1" fill="#59a9e5"/><rect x="378" y="2" width="1" height="1" fill="#59a9e5"/><rect x="376" y="4" width="1" height="1" fill="#59a9e5"/><rect x="380" y="0" width="1" height="1" fill="#59a9e5"/><rect x="382" y="2" width="1" height="1" fill="#59a9e5"/><rect x="380" y="4" width="1" height="1" fill="#59a9e5"/><rect x="384" y="0" width="1" height="1" fill="#59a9e5"/><rect x="386" y="2" width="1" height="1" fill="#59a9e5"/><rect x="384" y="4" width="1" height="1" fill="#59a9e5"/><rect x="388" y="0" width="1" height="1" fill="#59a9e5"/><rect x="390" y="2" width="1" height="1" fill="#59a9e5"/><rect x="388" y="4" width="1" height="1" fill="#59a9e5"/><rect x="392" y="0" width="1" height="1" fill="#59a9e5"/><rect x="394" y="2" width="1" height="1" fill="#59a9e5"/><rect x="392" y="4" width="1" height="1" fill="#59a9e5"/><rect x="396" y="0" width="1" height="1" fill="#59a9e5"/><rect x="398" y="2" width="1" height="1" fill="#59a9e5"/><rect x="396" y="4" width="1" height="1" fill="#59a9e5"/><rect x="400" y="0" width="1" height="1" fill="#59a9e5"/><rect x="402" y="2" width="1" height="1" fill="#59a9e5"/><rect x="400" y="4" width="1" height="1" fill="#59a9e5"/><rect x="404" y="0" width="1" height="1" fill="#59a9e5"/><rect x="406" y="2" width="1" height="1" fill="#59a9e5"/><rect x="404" y="4" width="1" height="1" fill="#59a9e5"/><rect x="408" y="0" width="1" height="1" fill="#59a9e5"/><rect x="410" y="2" width="1" height="1" fill="#59a9e5"/><rect x="408" y="4" width="1" height="1" fill="#59a9e5"/><rect x="412" y="0" width="1" height="1" fill="#59a9e5"/><rect x="414" y="2" width="1" height="1" fill="#59a9e5"/><rect x="412" y="4" width="1" height="1" fill="#59a9e5"/><rect x="416" y="0" width="1" height="1" fill="#59a9e5"/><rect x="418" y="2" width="1" height="1" fill="#59a9e5"/><rect x="416" y="4" width="1" height="1" fill="#59a9e5"/><rect x="420" y="0" width="1" height="1" fill="#59a9e5"/><rect x="422" y="2" width="1" height="1" fill="#59a9e5"/><rect x="420" y="4" width="1" height="1" fill="#59a9e5"/><rect x="424" y="0" width="1" height="1" fill="#59a9e5"/><rect x="426" y="2" width="1" height="1" fill="#59a9e5"/><rect x="424" y="4" width="1" height="1" fill="#59a9e5"/><rect x="428" y="0" width="1" height="1" fill="#59a9e5"/><rect x="430" y="2" width="1" height="1" fill="#59a9e5"/><rect x="428" y="4" width="1" height="1" fill="#59a9e5"/><rect x="432" y="0" width="1" height="1" fill="#59a9e5"/><rect x="434" y="2" width="1" height="1" fill="#59a9e5"/><rect x="432" y="4" width="1" height="1" fill="#59a9e5"/><rect x="436" y="0" width="1" height="1" fill="#59a9e5"/><rect x="438" y="2" width="1" height="1" fill="#59a9e5"/><rect x="436" y="4" width="1" height="1" fill="#59a9e5"/><rect x="440" y="0" width="1" height="1" fill="#59a9e5"/><rect x="442" y="2" width="1" height="1" fill="#59a9e5"/><rect x="440" y="4" width="1" height="1" fill="#59a9e5"/><rect x="444" y="0" width="1" height="1" fill="#59a9e5"/><rect x="446" y="2" width="1" height="1" fill="#59a9e5"/><rect x="444" y="4" width="1" height="1" fill="#59a9e5"/><rect x="448" y="0" width="1" height="1" fill="#59a9e5"/><rect x="450" y="2" width="1" height="1" fill="#59a9e5"/><rect x="448" y="4" width="1" height="1" fill="#59a9e5"/><rect x="452" y="0" width="1" height="1" fill="#59a9e5"/><rect x="454" y="2" width="1" height="1" fill="#59a9e5"/><rect x="452" y="4" width="1" height="1" fill="#59a9e5"/><rect x="456" y="0" width="1" height="1" fill="#59a9e5"/><rect x="458" y="2" width="1" height="1" fill="#59a9e5"/><rect x="456" y="4" width="1" height="1" fill="#59a9e5"/><rect x="460" y="0" width="1" height="1" fill="#59a9e5"/><rect x="462" y="2" width="1" height="1" fill="#59a9e5"/><rect x="460" y="4" width="1" height="1" fill="#59a9e5"/><rect x="464" y="0" width="1" height="1" fill="#59a9e5"/><rect x="466" y="2" width="1" height="1" fill="#59a9e5"/><rect x="464" y="4" width="1" height="1" fill="#59a9e5"/><rect x="468" y="0" width="1" height="1" fill="#59a9e5"/><rect x="470" y="2" width="1" height="1" fill="#59a9e5"/><rect x="468" y="4" width="1" height="1" fill="#59a9e5"/><rect x="472" y="0" width="1" height="1" fill="#59a9e5"/><rect x="474" y="2" width="1" height="1" fill="#59a9e5"/><rect x="472" y="4" width="1" height="1" fill="#59a9e5"/><rect x="476" y="0" width="1" height="1" fill="#59a9e5"/><rect x="478" y="2" width="1" height="1" fill="#59a9e5"/><rect x="476" y="4" width="1" height="1" fill="#59a9e5"/><rect x="480" y="0" width="1" height="1" fill="#59a9e5"/><rect x="482" y="2" width="1" height="1" fill="#59a9e5"/><rect x="480" y="4" width="1" height="1" fill="#59a9e5"/><rect x="484" y="0" width="1" height="1" fill="#59a9e5"/><rect x="486" y="2" width="1" height="1" fill="#59a9e5"/><rect x="484" y="4" width="1" height="1" fill="#59a9e5"/><rect x="488" y="0" width="1" height="1" fill="#59a9e5"/><rect x="490" y="2" width="1" height="1" fill="#59a9e5"/><rect x="488" y="4" width="1" height="1" fill="#59a9e5"/><rect x="492" y="0" width="1" height="1" fill="#59a9e5"/><rect x="494" y="2" width="1" height="1" fill="#59a9e5"/><rect x="492" y="4" width="1" height="1" fill="#59a9e5"/><rect x="496" y="0" width="1" height="1" fill="#59a9e5"/><rect x="498" y="2" width="1" height="1" fill="#59a9e5"/><rect x="496" y="4" width="1" height="1" fill="#59a9e5"/><rect x="500" y="0" width="1" height="1" fill="#59a9e5"/><rect x="502" y="2" width="1" height="1" fill="#59a9e5"/><rect x="500" y="4" width="1" height="1" fill="#59a9e5"/><rect x="504" y="0" width="1" height="1" fill="#59a9e5"/><rect x="506" y="2" width="1" height="1" fill="#59a9e5"/><rect x="504" y="4" width="1" height="1" fill="#59a9e5"/><rect x="508" y="0" width="1" height="1" fill="#59a9e5"/><rect x="510" y="2" width="1" height="1" fill="#59a9e5"/><rect x="508" y="4" width="1" height="1" fill="#59a9e5"/></svg><svg class="a" style="left:1853px;top:90px;" width="8" height="5" viewBox="0 0 8 5"><path d="M0 0 H8 L4 4Z" fill="#fff"/></svg><svg class="a" style="left:1870px;top:86px;" width="9" height="13" viewBox="0 0 9 13"><path d="M2 0 H7 V7 H9 V8 H0 V7 H2 Z M3 1 V7 H4 V1 Z" fill="#fff"/><rect x="4" y="8" width="1" height="5" fill="#fff"/></svg><svg class="a" style="left:1887px;top:87px;" width="11" height="11" viewBox="0 0 11 11"><path d="M1 1 L10 10 M10 1 L1 10" stroke="#fff" stroke-width="1.4"/></svg><div class="a" style="left:1299px;top:104px;width:606px;height:24px;background:#2d2d30;"></div><div class="a" style="left:1305px;top:107px;"><b>SmartWindow.cs</b> <span class="z">文件属性</span></div><svg class="a" style="left:1895px;top:114px;" width="7" height="4" viewBox="0 0 7 4"><path d="M0 0 H7 L3.5 3.5Z" fill="#f1f1f1"/></svg><div class="a" style="left:1299px;top:128px;width:606px;height:1px;background:#333337;"></div><div class="a" style="left:1299px;top:129px;width:606px;height:27px;background:#2d2d30;"></div><svg class="a" style="left:1305px;top:133px;" width="16" height="16" viewBox="0 0 16 16"><rect x="1" y="1" width="5" height="5" fill="#ccc"/><rect x="1" y="10" width="5" height="5" fill="#ccc"/><path d="M2 3.5 H5 M3.5 2 V5 M2 12.5 H5 M3.5 11 V14" stroke="#2d2d30"/><path d="M7 1.5 H11 M7 3.5 H11 M7 5.5 H11 M7 7.5 H11 M7 11.5 H11 M7 13.5 H11 M12 3.5 H14 M12 5.5 H14 M12 7.5 H14 M12 13.5 H14" stroke="#ccc"/></svg><div class="a" style="left:1325px;top:130px;width:24px;height:22px;background:#2d2d30;border:1px solid #3399ff"></div><svg class="a" style="left:1328px;top:133px;" width="18" height="16" viewBox="0 0 18 16"><rect x="1" y="1" width="7" height="7" fill="#ccc"/><text x="1.5" y="7.5" font-size="7.5" font-weight="bold" font-family="Liberation Sans" fill="#2d2d30">A</text><text x="1.5" y="15" font-size="8" font-weight="bold" font-family="Liberation Sans" fill="#ccc">Z</text><path d="M13 3 V12" stroke="#75beff" stroke-width="2"/><path d="M9.5 9 L13 13.5 L16.5 9Z" fill="#75beff"/></svg><div class="a" style="left:1351px;top:132px;width:1px;height:19px;background:#3f3f46;"></div><svg class="a" style="left:1357px;top:133px;" width="17" height="17" viewBox="0 0 17 17"><path d="M2 15 L9 8" stroke="#888" stroke-width="3.5" stroke-linecap="round"/><circle cx="11" cy="6" r="5" fill="#888"/><rect x="10" y="3" width="3" height="2" fill="#6a6a6a"/></svg><div class="a" style="left:1299px;top:156px;width:606px;height:693px;background:#252526;"></div><div class="a" style="left:1299px;top:156px;width:15px;height:114px;background:#2d2d30;"></div><div class="a" style="left:1314px;top:174px;width:591px;height:1px;background:#2d2d30;"></div><div class="a" style="left:1318px;top:158px;color:#f1f1f1"><span class="z">复制到输出目录</span></div><div class="a" style="left:1596px;top:158px;color:#f1f1f1;width:309px;overflow:hidden"><span class="z">不复制</span></div><div class="a" style="left:1314px;top:193px;width:591px;height:1px;background:#2d2d30;"></div><div class="a" style="left:1314px;top:175px;width:278px;height:18px;background:#3399ff;"></div><div class="a" style="left:1318px;top:177px;color:#f1f1f1"><span class="z">生成操作</span></div><div class="a" style="left:1596px;top:177px;color:#f1f1f1;width:309px;overflow:hidden"><span class="z">嵌入的资源</span></div><div class="a" style="left:1314px;top:212px;width:591px;height:1px;background:#2d2d30;"></div><div class="a" style="left:1318px;top:196px;color:#999"><span class="z">完整路径</span></div><div class="a" style="left:1596px;top:196px;color:#999;width:309px;overflow:hidden">E:\Users\octob\Source\Repos\<span class="z">通用</span>CSharp<span class="z">鼠标按键控制窗口</span>\SmartWindow\SmartWindow.cs</div><div class="a" style="left:1314px;top:231px;width:591px;height:1px;background:#2d2d30;"></div><div class="a" style="left:1318px;top:215px;color:#f1f1f1"><span class="z">文件名</span></div><div class="a" style="left:1596px;top:215px;color:#f1f1f1;width:309px;overflow:hidden">SmartWindow.cs</div><div class="a" style="left:1314px;top:250px;width:591px;height:1px;background:#2d2d30;"></div><div class="a" style="left:1318px;top:234px;color:#f1f1f1"><span class="z">自定义工具</span></div><div class="a" style="left:1596px;top:234px;color:#f1f1f1;width:309px;overflow:hidden"></div><div class="a" style="left:1314px;top:269px;width:591px;height:1px;background:#2d2d30;"></div><div class="a" style="left:1318px;top:253px;color:#f1f1f1"><span class="z">自定义工具命名空间</span></div><div class="a" style="left:1596px;top:253px;color:#f1f1f1;width:309px;overflow:hidden"></div><div class="a" style="left:1592px;top:156px;width:1px;height:114px;background:#2d2d30;"></div><div class="a" style="left:1887px;top:175px;width:16px;height:18px;background:#e0e0e0;border:1px solid #ccc"></div><svg class="a" style="left:1890px;top:181px;" width="10" height="6" viewBox="0 0 10 6"><path d="M1 0.5 L5 4.5 L9 0.5" stroke="#333" stroke-width="1.2" fill="none"/></svg><div class="a" style="left:1299px;top:849px;width:606px;height:1px;background:#333337;"></div><div class="a" style="left:1299px;top:850px;width:606px;height:62px;background:#252526;"></div><div class="a" style="left:1305px;top:857px;"><b><span class="z">生成操作</span></b></div><div class="a" style="left:1305px;top:875px;"><span class="z">该文件与生成和部署过程的关系。</span></div><div class="a" style="left:1298px;top:912px;width:608px;height:1px;background:#3f3f46;"></div><div class="a" style="left:1346px;top:912px;width:36px;height:22px;background:#252526;border:1px solid #3f3f46;border-top:none"></div><div class="a" style="left:1304px;top:915px;"><span class="z">工具箱</span></div><div class="a" style="left:1352px;top:915px;color:#0097fb"><span class="z">属性</span></div><div class="a" style="left:1388px;top:915px;"><span class="z">通知</span></div><div class="a" style="left:-3px;top:941px;"><span class="z">错误列表</span></div><div class="a" style="left:0px;top:960px;width:46px;height:6px;background:#3f3f46;"></div><div class="a" style="left:58px;top:941px;"><span class="z">输出</span></div><div class="a" style="left:58px;top:960px;width:24px;height:6px;background:#3f3f46;"></div><div class="a" style="left:94px;top:941px;"><span class="z">代码定义窗口</span></div><div class="a" style="left:94px;top:960px;width:72px;height:6px;background:#3f3f46;"></div><div class="a" style="left:178px;top:941px;"><span class="z">命令窗口</span></div><div class="a" style="left:178px;top:960px;width:48px;height:6px;background:#3f3f46;"></div><div class="a" style="left:238px;top:941px;"><span class="z">断点</span></div><div class="a" style="left:238px;top:960px;width:24px;height:6px;background:#3f3f46;"></div><div class="a" style="left:274px;top:941px;"><span class="z">程序包管理器控制台</span></div><div class="a" style="left:274px;top:960px;width:108px;height:6px;background:#3f3f46;"></div><div class="a" style="left:394px;top:941px;"><span class="z">查找符号结果</span></div><div class="a" style="left:394px;top:960px;width:72px;height:6px;background:#3f3f46;"></div><div class="a" style="left:0px;top:966px;width:1912px;height:25px;background:#007acc;"></div><svg class="a" style="left:0px;top:972px;" width="14" height="13" viewBox="0 0 14 13"><path d="M0 1.5 H12 L10.5 11.5 H0" stroke="#fff" stroke-width="1.2" fill="none"/></svg><div class="a" style="left:20px;top:971px;color:#fff"><span class="z">就绪</span></div><svg class="a" style="left:1768px;top:972px;" width="10" height="12" viewBox="0 0 10 12"><path d="M5 12 V2 M1 5.5 L5 1.5 L9 5.5" stroke="#fff" stroke-width="1.6" fill="none"/></svg><div class="a" style="left:1787px;top:971px;color:#fff"><span class="z">添加到源代码管理</span></div><svg class="a" style="left:1887px;top:976px;" width="9" height="5" viewBox="0 0 9 5"><path d="M0 5 L4.5 0 L9 5Z" fill="#fff"/></svg><div class="a" style="left:0px;top:991px;width:1912px;height:8px;background:#22699b;"></div><div class="a" style="left:1356px;top:991px;width:158px;height:8px;background:#2a7ab2;"></div></body></html>
